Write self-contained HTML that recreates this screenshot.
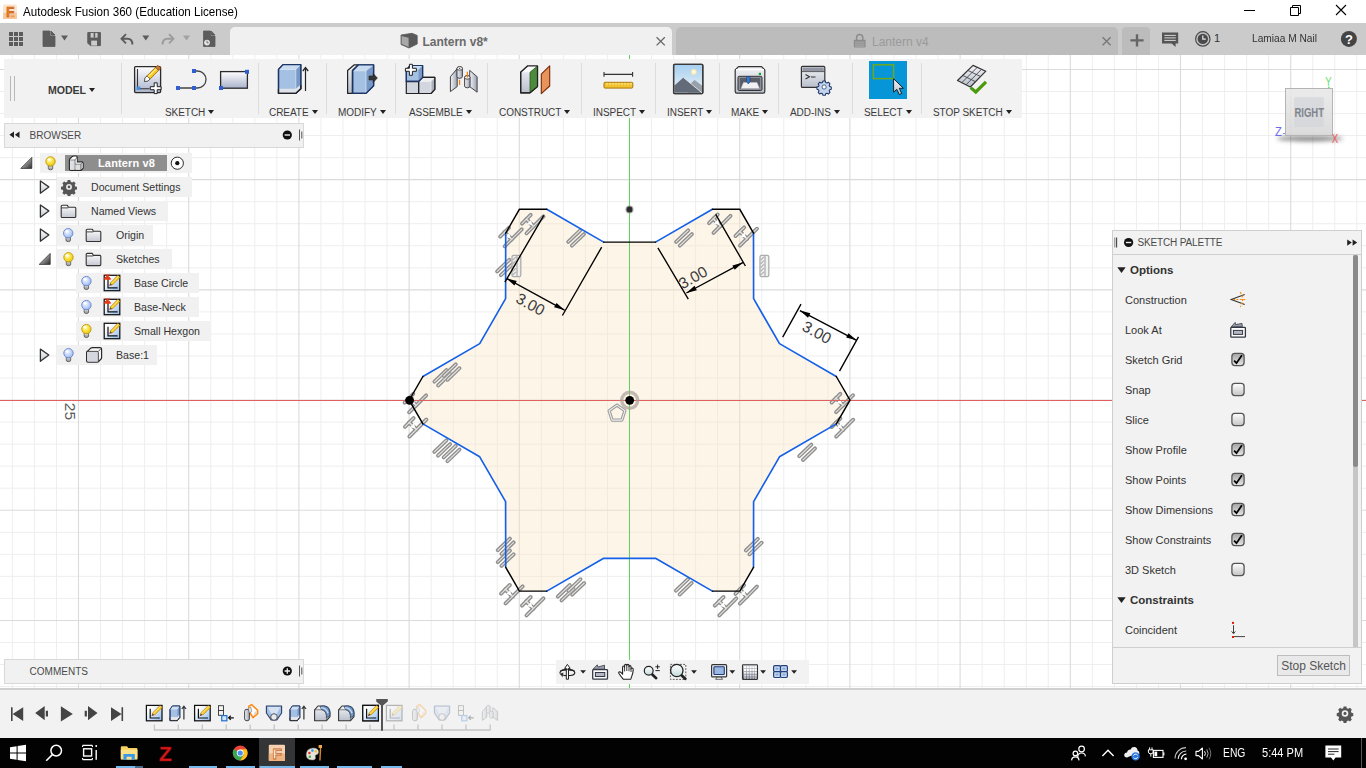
<!DOCTYPE html>
<html lang="en">
<head>
<meta charset="utf-8">
<title>Autodesk Fusion 360 (Education License)</title>
<style>
*{box-sizing:border-box;margin:0;padding:0}
html,body{width:1366px;height:768px;overflow:hidden;background:#fff}
body{position:relative;font-family:"Liberation Sans",Arial,sans-serif;font-size:12px;color:#3c3c3c}
.abs{position:absolute}
#titlebar{left:0;top:0;width:1366px;height:23px;background:#fff}
#titlebar .t{left:23px;top:5px;font-size:12.4px;color:#000;white-space:nowrap;transform:scaleX(0.937);transform-origin:0 0}
#tabbar{left:0;top:23px;width:1366px;height:32px;background:#cbcbcb}
#tab1{left:230px;top:27px;width:442px;height:28px;background:#f0f0f0;border-radius:5px 5px 0 0}
#tab2{left:676px;top:27px;width:442px;height:28px;background:#bcbcbc;border-radius:5px 5px 0 0}
#tabplus{left:1122px;top:27px;width:28px;height:28px;background:#bcbcbc;border-radius:4px 4px 0 0}
#canvas{left:0;top:55px;width:1366px;height:634px;background:#fff}
#toolbar{left:4px;top:59px;width:1018px;height:59px;background:#f2f2f2}
.tl{position:absolute;top:107px;font-size:10px;color:#3a3a3a;white-space:nowrap;letter-spacing:-0.05px}
.tl:after{content:"";display:inline-block;margin-left:3px;border:3.5px solid transparent;border-top:4.5px solid #222;border-bottom:none;vertical-align:2px}
.sep{position:absolute;top:63px;width:1px;height:51px;background:#dcdcdc}
#bottombar{left:0;top:688px;width:1366px;height:50px;background:#f2f2f2;border-top:2px solid #d0d0d0}
#taskbar{left:0;top:738px;width:1366px;height:30px;background:#020202}
.panelhdr{background:#f1f1f1;border:1px solid #d8d8d8;font-size:10px;color:#4a4a4a}
.tree{position:absolute;height:19.5px;margin-top:0.2px;background:#f1f1f1;font-size:10.6px;color:#333;line-height:20.6px;white-space:nowrap}
.pl{position:absolute;left:1125px;font-size:11px;color:#333;white-space:nowrap}
.cb{position:absolute;left:1232px;width:12px;height:12px;border:1px solid #555;border-radius:3px;background:linear-gradient(#fafafa,#d8d8d8)}
</style>
</head>
<body>
<svg class="abs" style="left:0;top:0" width="1366" height="768" viewBox="0 0 1366 768">
<path d="M12.38 55V689M34.42 55V689M56.46 55V689M100.54 55V689M122.58 55V689M144.62 55V689M166.66 55V689M210.74 55V689M232.78 55V689M254.82 55V689M276.86 55V689M320.94 55V689M342.98 55V689M365.02 55V689M387.06 55V689M431.14 55V689M453.18 55V689M475.22 55V689M497.26 55V689M541.34 55V689M563.38 55V689M585.42 55V689M607.46 55V689M651.54 55V689M673.58 55V689M695.62 55V689M717.66 55V689M761.74 55V689M783.78 55V689M805.82 55V689M827.86 55V689M871.94 55V689M893.98 55V689M916.02 55V689M938.06 55V689M982.14 55V689M1004.18 55V689M1026.22 55V689M1048.26 55V689M1092.34 55V689M1114.38 55V689M1136.42 55V689M1158.46 55V689M1202.54 55V689M1224.58 55V689M1246.62 55V689M1268.66 55V689M1312.74 55V689M1334.78 55V689M1356.82 55V689M0 91.49H1366M0 113.53H1366M0 135.57H1366M0 157.61H1366M0 201.69H1366M0 223.73H1366M0 245.77H1366M0 267.81H1366M0 311.89H1366M0 333.93H1366M0 355.97H1366M0 378.01H1366M0 422.09H1366M0 444.13H1366M0 466.17H1366M0 488.21H1366M0 532.29H1366M0 554.33H1366M0 576.37H1366M0 598.41H1366M0 642.49H1366M0 664.53H1366M0 686.57H1366" stroke="#eeeeee" stroke-width="1" fill="none"/>
<path d="M78.50 55V689M188.70 55V689M298.90 55V689M409.10 55V689M519.30 55V689M629.50 55V689M739.70 55V689M849.90 55V689M960.10 55V689M1070.30 55V689M1180.50 55V689M1290.70 55V689M0 69.45H1366M0 179.65H1366M0 289.85H1366M0 400.05H1366M0 510.25H1366M0 620.45H1366" stroke="#dbdbdb" stroke-width="1.1" fill="none"/>
<polygon points="836.3,376.5 850.0,400.2 836.3,423.9 779.5,456.8 753.6,501.7 753.5,567.3 739.8,591.1 712.4,591.1 655.5,558.3 603.7,558.3 546.8,591.1 519.4,591.1 505.7,567.3 505.6,501.7 479.7,456.8 422.9,423.9 409.2,400.2 422.9,376.5 479.7,343.6 505.6,298.7 505.7,233.1 519.4,209.3 546.8,209.3 603.7,242.1 655.5,242.1 712.4,209.3 739.8,209.3 753.5,233.1 753.6,298.7 779.5,343.6" fill="#f9e3c0" fill-opacity="0.36"/>
<path d="M500.2 236.6L508.9 227.9" stroke="#ffffff" stroke-opacity="0.3" stroke-width="5.0" stroke-linecap="round" fill="none"/>
<path d="M504.7 246.3L521.7 229.3" stroke="#ffffff" stroke-opacity="0.3" stroke-width="5.0" stroke-linecap="round" fill="none"/>
<path d="M504.6 232.3L511.6 239.3" stroke="#ffffff" stroke-opacity="0.3" stroke-width="5.4" stroke-linecap="round" fill="none"/>
<path d="M500.2 236.6L508.9 227.9" stroke="#8e8e8e" stroke-opacity="1" stroke-width="3.9" stroke-linecap="round" fill="none"/>
<path d="M504.7 246.3L521.7 229.3" stroke="#8e8e8e" stroke-opacity="1" stroke-width="3.9" stroke-linecap="round" fill="none"/>
<path d="M504.6 232.3L511.6 239.3" stroke="#8e8e8e" stroke-opacity="1" stroke-width="4.3" stroke-linecap="round" fill="none"/>
<path d="M500.2 236.6L508.9 227.9" stroke="#e4e1dc" stroke-opacity="1" stroke-width="1.2" stroke-linecap="round" fill="none"/>
<path d="M504.7 246.3L521.7 229.3" stroke="#e4e1dc" stroke-opacity="1" stroke-width="1.2" stroke-linecap="round" fill="none"/>
<path d="M504.6 232.3L511.6 239.3" stroke="#e4e1dc" stroke-opacity="1" stroke-width="1.6" stroke-linecap="round" fill="none"/>
<polygon points="505.2,237.0 509.3,232.9 510.6,238.3" fill="#fff"/>
<path d="M522.0 223.6L530.7 214.9" stroke="#ffffff" stroke-opacity="0.3" stroke-width="5.0" stroke-linecap="round" fill="none"/>
<path d="M526.5 233.3L543.5 216.3" stroke="#ffffff" stroke-opacity="0.3" stroke-width="5.0" stroke-linecap="round" fill="none"/>
<path d="M526.4 219.3L533.4 226.3" stroke="#ffffff" stroke-opacity="0.3" stroke-width="5.4" stroke-linecap="round" fill="none"/>
<path d="M522.0 223.6L530.7 214.9" stroke="#8e8e8e" stroke-opacity="1" stroke-width="3.9" stroke-linecap="round" fill="none"/>
<path d="M526.5 233.3L543.5 216.3" stroke="#8e8e8e" stroke-opacity="1" stroke-width="3.9" stroke-linecap="round" fill="none"/>
<path d="M526.4 219.3L533.4 226.3" stroke="#8e8e8e" stroke-opacity="1" stroke-width="4.3" stroke-linecap="round" fill="none"/>
<path d="M522.0 223.6L530.7 214.9" stroke="#e4e1dc" stroke-opacity="1" stroke-width="1.2" stroke-linecap="round" fill="none"/>
<path d="M526.5 233.3L543.5 216.3" stroke="#e4e1dc" stroke-opacity="1" stroke-width="1.2" stroke-linecap="round" fill="none"/>
<path d="M526.4 219.3L533.4 226.3" stroke="#e4e1dc" stroke-opacity="1" stroke-width="1.6" stroke-linecap="round" fill="none"/>
<polygon points="527.0,224.0 531.1,219.9 532.4,225.3" fill="#fff"/>
<path d="M709.0 223.2L717.7 214.5" stroke="#ffffff" stroke-opacity="0.3" stroke-width="5.0" stroke-linecap="round" fill="none"/>
<path d="M713.5 232.9L730.5 215.9" stroke="#ffffff" stroke-opacity="0.3" stroke-width="5.0" stroke-linecap="round" fill="none"/>
<path d="M713.4 218.9L720.4 225.9" stroke="#ffffff" stroke-opacity="0.3" stroke-width="5.4" stroke-linecap="round" fill="none"/>
<path d="M709.0 223.2L717.7 214.5" stroke="#8e8e8e" stroke-opacity="1" stroke-width="3.9" stroke-linecap="round" fill="none"/>
<path d="M713.5 232.9L730.5 215.9" stroke="#8e8e8e" stroke-opacity="1" stroke-width="3.9" stroke-linecap="round" fill="none"/>
<path d="M713.4 218.9L720.4 225.9" stroke="#8e8e8e" stroke-opacity="1" stroke-width="4.3" stroke-linecap="round" fill="none"/>
<path d="M709.0 223.2L717.7 214.5" stroke="#e4e1dc" stroke-opacity="1" stroke-width="1.2" stroke-linecap="round" fill="none"/>
<path d="M713.5 232.9L730.5 215.9" stroke="#e4e1dc" stroke-opacity="1" stroke-width="1.2" stroke-linecap="round" fill="none"/>
<path d="M713.4 218.9L720.4 225.9" stroke="#e4e1dc" stroke-opacity="1" stroke-width="1.6" stroke-linecap="round" fill="none"/>
<polygon points="714.0,223.6 718.1,219.5 719.4,224.9" fill="#fff"/>
<path d="M735.5 236.0L744.2 227.3" stroke="#ffffff" stroke-opacity="0.3" stroke-width="5.0" stroke-linecap="round" fill="none"/>
<path d="M740.0 245.7L757.0 228.7" stroke="#ffffff" stroke-opacity="0.3" stroke-width="5.0" stroke-linecap="round" fill="none"/>
<path d="M739.9 231.7L746.9 238.7" stroke="#ffffff" stroke-opacity="0.3" stroke-width="5.4" stroke-linecap="round" fill="none"/>
<path d="M735.5 236.0L744.2 227.3" stroke="#8e8e8e" stroke-opacity="1" stroke-width="3.9" stroke-linecap="round" fill="none"/>
<path d="M740.0 245.7L757.0 228.7" stroke="#8e8e8e" stroke-opacity="1" stroke-width="3.9" stroke-linecap="round" fill="none"/>
<path d="M739.9 231.7L746.9 238.7" stroke="#8e8e8e" stroke-opacity="1" stroke-width="4.3" stroke-linecap="round" fill="none"/>
<path d="M735.5 236.0L744.2 227.3" stroke="#e4e1dc" stroke-opacity="1" stroke-width="1.2" stroke-linecap="round" fill="none"/>
<path d="M740.0 245.7L757.0 228.7" stroke="#e4e1dc" stroke-opacity="1" stroke-width="1.2" stroke-linecap="round" fill="none"/>
<path d="M739.9 231.7L746.9 238.7" stroke="#e4e1dc" stroke-opacity="1" stroke-width="1.6" stroke-linecap="round" fill="none"/>
<polygon points="740.5,236.4 744.6,232.3 745.9,237.7" fill="#fff"/>
<path d="M404.6 402.6L413.3 393.9" stroke="#ffffff" stroke-opacity="0.3" stroke-width="5.0" stroke-linecap="round" fill="none"/>
<path d="M409.1 412.3L426.1 395.3" stroke="#ffffff" stroke-opacity="0.3" stroke-width="5.0" stroke-linecap="round" fill="none"/>
<path d="M409.0 398.3L416.0 405.3" stroke="#ffffff" stroke-opacity="0.3" stroke-width="5.4" stroke-linecap="round" fill="none"/>
<path d="M404.6 402.6L413.3 393.9" stroke="#8e8e8e" stroke-opacity="1" stroke-width="3.9" stroke-linecap="round" fill="none"/>
<path d="M409.1 412.3L426.1 395.3" stroke="#8e8e8e" stroke-opacity="1" stroke-width="3.9" stroke-linecap="round" fill="none"/>
<path d="M409.0 398.3L416.0 405.3" stroke="#8e8e8e" stroke-opacity="1" stroke-width="4.3" stroke-linecap="round" fill="none"/>
<path d="M404.6 402.6L413.3 393.9" stroke="#e4e1dc" stroke-opacity="1" stroke-width="1.2" stroke-linecap="round" fill="none"/>
<path d="M409.1 412.3L426.1 395.3" stroke="#e4e1dc" stroke-opacity="1" stroke-width="1.2" stroke-linecap="round" fill="none"/>
<path d="M409.0 398.3L416.0 405.3" stroke="#e4e1dc" stroke-opacity="1" stroke-width="1.6" stroke-linecap="round" fill="none"/>
<polygon points="409.6,403.0 413.7,398.9 415.0,404.3" fill="#fff"/>
<path d="M404.9 426.8L413.6 418.1" stroke="#ffffff" stroke-opacity="0.3" stroke-width="5.0" stroke-linecap="round" fill="none"/>
<path d="M409.4 436.5L426.4 419.5" stroke="#ffffff" stroke-opacity="0.3" stroke-width="5.0" stroke-linecap="round" fill="none"/>
<path d="M409.3 422.5L416.3 429.5" stroke="#ffffff" stroke-opacity="0.3" stroke-width="5.4" stroke-linecap="round" fill="none"/>
<path d="M404.9 426.8L413.6 418.1" stroke="#8e8e8e" stroke-opacity="1" stroke-width="3.9" stroke-linecap="round" fill="none"/>
<path d="M409.4 436.5L426.4 419.5" stroke="#8e8e8e" stroke-opacity="1" stroke-width="3.9" stroke-linecap="round" fill="none"/>
<path d="M409.3 422.5L416.3 429.5" stroke="#8e8e8e" stroke-opacity="1" stroke-width="4.3" stroke-linecap="round" fill="none"/>
<path d="M404.9 426.8L413.6 418.1" stroke="#e4e1dc" stroke-opacity="1" stroke-width="1.2" stroke-linecap="round" fill="none"/>
<path d="M409.4 436.5L426.4 419.5" stroke="#e4e1dc" stroke-opacity="1" stroke-width="1.2" stroke-linecap="round" fill="none"/>
<path d="M409.3 422.5L416.3 429.5" stroke="#e4e1dc" stroke-opacity="1" stroke-width="1.6" stroke-linecap="round" fill="none"/>
<polygon points="409.9,427.2 414.0,423.1 415.3,428.5" fill="#fff"/>
<path d="M831.6 402.5L840.3 393.8" stroke="#ffffff" stroke-opacity="0.3" stroke-width="5.0" stroke-linecap="round" fill="none"/>
<path d="M836.1 412.2L853.1 395.2" stroke="#ffffff" stroke-opacity="0.3" stroke-width="5.0" stroke-linecap="round" fill="none"/>
<path d="M836.0 398.2L843.0 405.2" stroke="#ffffff" stroke-opacity="0.3" stroke-width="5.4" stroke-linecap="round" fill="none"/>
<path d="M831.6 402.5L840.3 393.8" stroke="#8e8e8e" stroke-opacity="1" stroke-width="3.9" stroke-linecap="round" fill="none"/>
<path d="M836.1 412.2L853.1 395.2" stroke="#8e8e8e" stroke-opacity="1" stroke-width="3.9" stroke-linecap="round" fill="none"/>
<path d="M836.0 398.2L843.0 405.2" stroke="#8e8e8e" stroke-opacity="1" stroke-width="4.3" stroke-linecap="round" fill="none"/>
<path d="M831.6 402.5L840.3 393.8" stroke="#e4e1dc" stroke-opacity="1" stroke-width="1.2" stroke-linecap="round" fill="none"/>
<path d="M836.1 412.2L853.1 395.2" stroke="#e4e1dc" stroke-opacity="1" stroke-width="1.2" stroke-linecap="round" fill="none"/>
<path d="M836.0 398.2L843.0 405.2" stroke="#e4e1dc" stroke-opacity="1" stroke-width="1.6" stroke-linecap="round" fill="none"/>
<polygon points="836.6,402.9 840.7,398.8 842.0,404.2" fill="#fff"/>
<path d="M831.7 427.0L840.4 418.3" stroke="#ffffff" stroke-opacity="0.3" stroke-width="5.0" stroke-linecap="round" fill="none"/>
<path d="M836.2 436.7L853.2 419.7" stroke="#ffffff" stroke-opacity="0.3" stroke-width="5.0" stroke-linecap="round" fill="none"/>
<path d="M836.1 422.7L843.1 429.7" stroke="#ffffff" stroke-opacity="0.3" stroke-width="5.4" stroke-linecap="round" fill="none"/>
<path d="M831.7 427.0L840.4 418.3" stroke="#8e8e8e" stroke-opacity="1" stroke-width="3.9" stroke-linecap="round" fill="none"/>
<path d="M836.2 436.7L853.2 419.7" stroke="#8e8e8e" stroke-opacity="1" stroke-width="3.9" stroke-linecap="round" fill="none"/>
<path d="M836.1 422.7L843.1 429.7" stroke="#8e8e8e" stroke-opacity="1" stroke-width="4.3" stroke-linecap="round" fill="none"/>
<path d="M831.7 427.0L840.4 418.3" stroke="#e4e1dc" stroke-opacity="1" stroke-width="1.2" stroke-linecap="round" fill="none"/>
<path d="M836.2 436.7L853.2 419.7" stroke="#e4e1dc" stroke-opacity="1" stroke-width="1.2" stroke-linecap="round" fill="none"/>
<path d="M836.1 422.7L843.1 429.7" stroke="#e4e1dc" stroke-opacity="1" stroke-width="1.6" stroke-linecap="round" fill="none"/>
<polygon points="836.7,427.4 840.8,423.3 842.1,428.7" fill="#fff"/>
<path d="M501.1 593.7L509.8 585.0" stroke="#ffffff" stroke-opacity="0.3" stroke-width="5.0" stroke-linecap="round" fill="none"/>
<path d="M505.6 603.4L522.6 586.4" stroke="#ffffff" stroke-opacity="0.3" stroke-width="5.0" stroke-linecap="round" fill="none"/>
<path d="M505.5 589.4L512.5 596.4" stroke="#ffffff" stroke-opacity="0.3" stroke-width="5.4" stroke-linecap="round" fill="none"/>
<path d="M501.1 593.7L509.8 585.0" stroke="#8e8e8e" stroke-opacity="1" stroke-width="3.9" stroke-linecap="round" fill="none"/>
<path d="M505.6 603.4L522.6 586.4" stroke="#8e8e8e" stroke-opacity="1" stroke-width="3.9" stroke-linecap="round" fill="none"/>
<path d="M505.5 589.4L512.5 596.4" stroke="#8e8e8e" stroke-opacity="1" stroke-width="4.3" stroke-linecap="round" fill="none"/>
<path d="M501.1 593.7L509.8 585.0" stroke="#e4e1dc" stroke-opacity="1" stroke-width="1.2" stroke-linecap="round" fill="none"/>
<path d="M505.6 603.4L522.6 586.4" stroke="#e4e1dc" stroke-opacity="1" stroke-width="1.2" stroke-linecap="round" fill="none"/>
<path d="M505.5 589.4L512.5 596.4" stroke="#e4e1dc" stroke-opacity="1" stroke-width="1.6" stroke-linecap="round" fill="none"/>
<polygon points="506.1,594.1 510.2,590.0 511.5,595.4" fill="#fff"/>
<path d="M522.0 605.7L530.7 597.0" stroke="#ffffff" stroke-opacity="0.3" stroke-width="5.0" stroke-linecap="round" fill="none"/>
<path d="M526.5 615.4L543.5 598.4" stroke="#ffffff" stroke-opacity="0.3" stroke-width="5.0" stroke-linecap="round" fill="none"/>
<path d="M526.4 601.4L533.4 608.4" stroke="#ffffff" stroke-opacity="0.3" stroke-width="5.4" stroke-linecap="round" fill="none"/>
<path d="M522.0 605.7L530.7 597.0" stroke="#8e8e8e" stroke-opacity="1" stroke-width="3.9" stroke-linecap="round" fill="none"/>
<path d="M526.5 615.4L543.5 598.4" stroke="#8e8e8e" stroke-opacity="1" stroke-width="3.9" stroke-linecap="round" fill="none"/>
<path d="M526.4 601.4L533.4 608.4" stroke="#8e8e8e" stroke-opacity="1" stroke-width="4.3" stroke-linecap="round" fill="none"/>
<path d="M522.0 605.7L530.7 597.0" stroke="#e4e1dc" stroke-opacity="1" stroke-width="1.2" stroke-linecap="round" fill="none"/>
<path d="M526.5 615.4L543.5 598.4" stroke="#e4e1dc" stroke-opacity="1" stroke-width="1.2" stroke-linecap="round" fill="none"/>
<path d="M526.4 601.4L533.4 608.4" stroke="#e4e1dc" stroke-opacity="1" stroke-width="1.6" stroke-linecap="round" fill="none"/>
<polygon points="527.0,606.1 531.1,602.0 532.4,607.4" fill="#fff"/>
<path d="M714.8 605.7L723.5 597.0" stroke="#ffffff" stroke-opacity="0.3" stroke-width="5.0" stroke-linecap="round" fill="none"/>
<path d="M719.3 615.4L736.3 598.4" stroke="#ffffff" stroke-opacity="0.3" stroke-width="5.0" stroke-linecap="round" fill="none"/>
<path d="M719.2 601.4L726.2 608.4" stroke="#ffffff" stroke-opacity="0.3" stroke-width="5.4" stroke-linecap="round" fill="none"/>
<path d="M714.8 605.7L723.5 597.0" stroke="#8e8e8e" stroke-opacity="1" stroke-width="3.9" stroke-linecap="round" fill="none"/>
<path d="M719.3 615.4L736.3 598.4" stroke="#8e8e8e" stroke-opacity="1" stroke-width="3.9" stroke-linecap="round" fill="none"/>
<path d="M719.2 601.4L726.2 608.4" stroke="#8e8e8e" stroke-opacity="1" stroke-width="4.3" stroke-linecap="round" fill="none"/>
<path d="M714.8 605.7L723.5 597.0" stroke="#e4e1dc" stroke-opacity="1" stroke-width="1.2" stroke-linecap="round" fill="none"/>
<path d="M719.3 615.4L736.3 598.4" stroke="#e4e1dc" stroke-opacity="1" stroke-width="1.2" stroke-linecap="round" fill="none"/>
<path d="M719.2 601.4L726.2 608.4" stroke="#e4e1dc" stroke-opacity="1" stroke-width="1.6" stroke-linecap="round" fill="none"/>
<polygon points="719.8,606.1 723.9,602.0 725.2,607.4" fill="#fff"/>
<path d="M735.4 593.9L744.1 585.2" stroke="#ffffff" stroke-opacity="0.3" stroke-width="5.0" stroke-linecap="round" fill="none"/>
<path d="M739.9 603.6L756.9 586.6" stroke="#ffffff" stroke-opacity="0.3" stroke-width="5.0" stroke-linecap="round" fill="none"/>
<path d="M739.8 589.6L746.8 596.6" stroke="#ffffff" stroke-opacity="0.3" stroke-width="5.4" stroke-linecap="round" fill="none"/>
<path d="M735.4 593.9L744.1 585.2" stroke="#8e8e8e" stroke-opacity="1" stroke-width="3.9" stroke-linecap="round" fill="none"/>
<path d="M739.9 603.6L756.9 586.6" stroke="#8e8e8e" stroke-opacity="1" stroke-width="3.9" stroke-linecap="round" fill="none"/>
<path d="M739.8 589.6L746.8 596.6" stroke="#8e8e8e" stroke-opacity="1" stroke-width="4.3" stroke-linecap="round" fill="none"/>
<path d="M735.4 593.9L744.1 585.2" stroke="#e4e1dc" stroke-opacity="1" stroke-width="1.2" stroke-linecap="round" fill="none"/>
<path d="M739.9 603.6L756.9 586.6" stroke="#e4e1dc" stroke-opacity="1" stroke-width="1.2" stroke-linecap="round" fill="none"/>
<path d="M739.8 589.6L746.8 596.6" stroke="#e4e1dc" stroke-opacity="1" stroke-width="1.6" stroke-linecap="round" fill="none"/>
<polygon points="740.4,594.3 744.5,590.2 745.8,595.6" fill="#fff"/>
<path d="M568.2 241.9L580.3 230.3" stroke="#ffffff" stroke-opacity="0.3" stroke-width="5.0" stroke-linecap="round" fill="none"/>
<path d="M571.9 245.7L584.0 234.1" stroke="#ffffff" stroke-opacity="0.3" stroke-width="5.0" stroke-linecap="round" fill="none"/>
<path d="M568.2 241.9L580.3 230.3" stroke="#8e8e8e" stroke-opacity="1" stroke-width="3.9" stroke-linecap="round" fill="none"/>
<path d="M571.9 245.7L584.0 234.1" stroke="#8e8e8e" stroke-opacity="1" stroke-width="3.9" stroke-linecap="round" fill="none"/>
<path d="M568.2 241.9L580.3 230.3" stroke="#e4e1dc" stroke-opacity="1" stroke-width="1.2" stroke-linecap="round" fill="none"/>
<path d="M571.9 245.7L584.0 234.1" stroke="#e4e1dc" stroke-opacity="1" stroke-width="1.2" stroke-linecap="round" fill="none"/>
<path d="M497.2 271.4L509.3 259.8" stroke="#ffffff" stroke-opacity="0.3" stroke-width="5.0" stroke-linecap="round" fill="none"/>
<path d="M500.9 275.2L513.0 263.6" stroke="#ffffff" stroke-opacity="0.3" stroke-width="5.0" stroke-linecap="round" fill="none"/>
<path d="M497.2 271.4L509.3 259.8" stroke="#8e8e8e" stroke-opacity="1" stroke-width="3.9" stroke-linecap="round" fill="none"/>
<path d="M500.9 275.2L513.0 263.6" stroke="#8e8e8e" stroke-opacity="1" stroke-width="3.9" stroke-linecap="round" fill="none"/>
<path d="M497.2 271.4L509.3 259.8" stroke="#e4e1dc" stroke-opacity="1" stroke-width="1.2" stroke-linecap="round" fill="none"/>
<path d="M500.9 275.2L513.0 263.6" stroke="#e4e1dc" stroke-opacity="1" stroke-width="1.2" stroke-linecap="round" fill="none"/>
<path d="M676.1 241.9L688.2 230.3" stroke="#ffffff" stroke-opacity="0.3" stroke-width="5.0" stroke-linecap="round" fill="none"/>
<path d="M679.8 245.7L691.9 234.1" stroke="#ffffff" stroke-opacity="0.3" stroke-width="5.0" stroke-linecap="round" fill="none"/>
<path d="M676.1 241.9L688.2 230.3" stroke="#8e8e8e" stroke-opacity="1" stroke-width="3.9" stroke-linecap="round" fill="none"/>
<path d="M679.8 245.7L691.9 234.1" stroke="#8e8e8e" stroke-opacity="1" stroke-width="3.9" stroke-linecap="round" fill="none"/>
<path d="M676.1 241.9L688.2 230.3" stroke="#e4e1dc" stroke-opacity="1" stroke-width="1.2" stroke-linecap="round" fill="none"/>
<path d="M679.8 245.7L691.9 234.1" stroke="#e4e1dc" stroke-opacity="1" stroke-width="1.2" stroke-linecap="round" fill="none"/>
<path d="M434.4 381.7L446.5 370.1" stroke="#ffffff" stroke-opacity="0.3" stroke-width="5.0" stroke-linecap="round" fill="none"/>
<path d="M438.1 385.5L450.2 373.9" stroke="#ffffff" stroke-opacity="0.3" stroke-width="5.0" stroke-linecap="round" fill="none"/>
<path d="M434.4 381.7L446.5 370.1" stroke="#8e8e8e" stroke-opacity="1" stroke-width="3.9" stroke-linecap="round" fill="none"/>
<path d="M438.1 385.5L450.2 373.9" stroke="#8e8e8e" stroke-opacity="1" stroke-width="3.9" stroke-linecap="round" fill="none"/>
<path d="M434.4 381.7L446.5 370.1" stroke="#e4e1dc" stroke-opacity="1" stroke-width="1.2" stroke-linecap="round" fill="none"/>
<path d="M438.1 385.5L450.2 373.9" stroke="#e4e1dc" stroke-opacity="1" stroke-width="1.2" stroke-linecap="round" fill="none"/>
<path d="M443.7 376.0L455.8 364.4" stroke="#ffffff" stroke-opacity="0.3" stroke-width="5.0" stroke-linecap="round" fill="none"/>
<path d="M447.4 379.8L459.5 368.2" stroke="#ffffff" stroke-opacity="0.3" stroke-width="5.0" stroke-linecap="round" fill="none"/>
<path d="M443.7 376.0L455.8 364.4" stroke="#8e8e8e" stroke-opacity="1" stroke-width="3.9" stroke-linecap="round" fill="none"/>
<path d="M447.4 379.8L459.5 368.2" stroke="#8e8e8e" stroke-opacity="1" stroke-width="3.9" stroke-linecap="round" fill="none"/>
<path d="M443.7 376.0L455.8 364.4" stroke="#e4e1dc" stroke-opacity="1" stroke-width="1.2" stroke-linecap="round" fill="none"/>
<path d="M447.4 379.8L459.5 368.2" stroke="#e4e1dc" stroke-opacity="1" stroke-width="1.2" stroke-linecap="round" fill="none"/>
<path d="M434.3 451.9L446.4 440.3" stroke="#ffffff" stroke-opacity="0.3" stroke-width="5.0" stroke-linecap="round" fill="none"/>
<path d="M438.0 455.7L450.1 444.1" stroke="#ffffff" stroke-opacity="0.3" stroke-width="5.0" stroke-linecap="round" fill="none"/>
<path d="M434.3 451.9L446.4 440.3" stroke="#8e8e8e" stroke-opacity="1" stroke-width="3.9" stroke-linecap="round" fill="none"/>
<path d="M438.0 455.7L450.1 444.1" stroke="#8e8e8e" stroke-opacity="1" stroke-width="3.9" stroke-linecap="round" fill="none"/>
<path d="M434.3 451.9L446.4 440.3" stroke="#e4e1dc" stroke-opacity="1" stroke-width="1.2" stroke-linecap="round" fill="none"/>
<path d="M438.0 455.7L450.1 444.1" stroke="#e4e1dc" stroke-opacity="1" stroke-width="1.2" stroke-linecap="round" fill="none"/>
<path d="M443.7 457.4L455.8 445.8" stroke="#ffffff" stroke-opacity="0.3" stroke-width="5.0" stroke-linecap="round" fill="none"/>
<path d="M447.4 461.2L459.5 449.6" stroke="#ffffff" stroke-opacity="0.3" stroke-width="5.0" stroke-linecap="round" fill="none"/>
<path d="M443.7 457.4L455.8 445.8" stroke="#8e8e8e" stroke-opacity="1" stroke-width="3.9" stroke-linecap="round" fill="none"/>
<path d="M447.4 461.2L459.5 449.6" stroke="#8e8e8e" stroke-opacity="1" stroke-width="3.9" stroke-linecap="round" fill="none"/>
<path d="M443.7 457.4L455.8 445.8" stroke="#e4e1dc" stroke-opacity="1" stroke-width="1.2" stroke-linecap="round" fill="none"/>
<path d="M447.4 461.2L459.5 449.6" stroke="#e4e1dc" stroke-opacity="1" stroke-width="1.2" stroke-linecap="round" fill="none"/>
<path d="M799.2 456.2L811.3 444.6" stroke="#ffffff" stroke-opacity="0.3" stroke-width="5.0" stroke-linecap="round" fill="none"/>
<path d="M802.9 460.0L815.0 448.4" stroke="#ffffff" stroke-opacity="0.3" stroke-width="5.0" stroke-linecap="round" fill="none"/>
<path d="M799.2 456.2L811.3 444.6" stroke="#8e8e8e" stroke-opacity="1" stroke-width="3.9" stroke-linecap="round" fill="none"/>
<path d="M802.9 460.0L815.0 448.4" stroke="#8e8e8e" stroke-opacity="1" stroke-width="3.9" stroke-linecap="round" fill="none"/>
<path d="M799.2 456.2L811.3 444.6" stroke="#e4e1dc" stroke-opacity="1" stroke-width="1.2" stroke-linecap="round" fill="none"/>
<path d="M802.9 460.0L815.0 448.4" stroke="#e4e1dc" stroke-opacity="1" stroke-width="1.2" stroke-linecap="round" fill="none"/>
<path d="M497.8 550.2L509.9 538.6" stroke="#ffffff" stroke-opacity="0.3" stroke-width="5.0" stroke-linecap="round" fill="none"/>
<path d="M501.5 554.0L513.6 542.4" stroke="#ffffff" stroke-opacity="0.3" stroke-width="5.0" stroke-linecap="round" fill="none"/>
<path d="M497.8 550.2L509.9 538.6" stroke="#8e8e8e" stroke-opacity="1" stroke-width="3.9" stroke-linecap="round" fill="none"/>
<path d="M501.5 554.0L513.6 542.4" stroke="#8e8e8e" stroke-opacity="1" stroke-width="3.9" stroke-linecap="round" fill="none"/>
<path d="M497.8 550.2L509.9 538.6" stroke="#e4e1dc" stroke-opacity="1" stroke-width="1.2" stroke-linecap="round" fill="none"/>
<path d="M501.5 554.0L513.6 542.4" stroke="#e4e1dc" stroke-opacity="1" stroke-width="1.2" stroke-linecap="round" fill="none"/>
<path d="M497.8 562.1L509.9 550.5" stroke="#ffffff" stroke-opacity="0.3" stroke-width="5.0" stroke-linecap="round" fill="none"/>
<path d="M501.5 565.9L513.6 554.3" stroke="#ffffff" stroke-opacity="0.3" stroke-width="5.0" stroke-linecap="round" fill="none"/>
<path d="M497.8 562.1L509.9 550.5" stroke="#8e8e8e" stroke-opacity="1" stroke-width="3.9" stroke-linecap="round" fill="none"/>
<path d="M501.5 565.9L513.6 554.3" stroke="#8e8e8e" stroke-opacity="1" stroke-width="3.9" stroke-linecap="round" fill="none"/>
<path d="M497.8 562.1L509.9 550.5" stroke="#e4e1dc" stroke-opacity="1" stroke-width="1.2" stroke-linecap="round" fill="none"/>
<path d="M501.5 565.9L513.6 554.3" stroke="#e4e1dc" stroke-opacity="1" stroke-width="1.2" stroke-linecap="round" fill="none"/>
<path d="M745.8 550.5L757.9 538.9" stroke="#ffffff" stroke-opacity="0.3" stroke-width="5.0" stroke-linecap="round" fill="none"/>
<path d="M749.5 554.3L761.6 542.7" stroke="#ffffff" stroke-opacity="0.3" stroke-width="5.0" stroke-linecap="round" fill="none"/>
<path d="M745.8 550.5L757.9 538.9" stroke="#8e8e8e" stroke-opacity="1" stroke-width="3.9" stroke-linecap="round" fill="none"/>
<path d="M749.5 554.3L761.6 542.7" stroke="#8e8e8e" stroke-opacity="1" stroke-width="3.9" stroke-linecap="round" fill="none"/>
<path d="M745.8 550.5L757.9 538.9" stroke="#e4e1dc" stroke-opacity="1" stroke-width="1.2" stroke-linecap="round" fill="none"/>
<path d="M749.5 554.3L761.6 542.7" stroke="#e4e1dc" stroke-opacity="1" stroke-width="1.2" stroke-linecap="round" fill="none"/>
<path d="M557.8 596.6L569.9 585.0" stroke="#ffffff" stroke-opacity="0.3" stroke-width="5.0" stroke-linecap="round" fill="none"/>
<path d="M561.5 600.4L573.6 588.8" stroke="#ffffff" stroke-opacity="0.3" stroke-width="5.0" stroke-linecap="round" fill="none"/>
<path d="M557.8 596.6L569.9 585.0" stroke="#8e8e8e" stroke-opacity="1" stroke-width="3.9" stroke-linecap="round" fill="none"/>
<path d="M561.5 600.4L573.6 588.8" stroke="#8e8e8e" stroke-opacity="1" stroke-width="3.9" stroke-linecap="round" fill="none"/>
<path d="M557.8 596.6L569.9 585.0" stroke="#e4e1dc" stroke-opacity="1" stroke-width="1.2" stroke-linecap="round" fill="none"/>
<path d="M561.5 600.4L573.6 588.8" stroke="#e4e1dc" stroke-opacity="1" stroke-width="1.2" stroke-linecap="round" fill="none"/>
<path d="M568.4 590.8L580.5 579.2" stroke="#ffffff" stroke-opacity="0.3" stroke-width="5.0" stroke-linecap="round" fill="none"/>
<path d="M572.1 594.6L584.2 583.0" stroke="#ffffff" stroke-opacity="0.3" stroke-width="5.0" stroke-linecap="round" fill="none"/>
<path d="M568.4 590.8L580.5 579.2" stroke="#8e8e8e" stroke-opacity="1" stroke-width="3.9" stroke-linecap="round" fill="none"/>
<path d="M572.1 594.6L584.2 583.0" stroke="#8e8e8e" stroke-opacity="1" stroke-width="3.9" stroke-linecap="round" fill="none"/>
<path d="M568.4 590.8L580.5 579.2" stroke="#e4e1dc" stroke-opacity="1" stroke-width="1.2" stroke-linecap="round" fill="none"/>
<path d="M572.1 594.6L584.2 583.0" stroke="#e4e1dc" stroke-opacity="1" stroke-width="1.2" stroke-linecap="round" fill="none"/>
<path d="M675.9 590.7L688.0 579.1" stroke="#ffffff" stroke-opacity="0.3" stroke-width="5.0" stroke-linecap="round" fill="none"/>
<path d="M679.6 594.5L691.7 582.9" stroke="#ffffff" stroke-opacity="0.3" stroke-width="5.0" stroke-linecap="round" fill="none"/>
<path d="M675.9 590.7L688.0 579.1" stroke="#8e8e8e" stroke-opacity="1" stroke-width="3.9" stroke-linecap="round" fill="none"/>
<path d="M679.6 594.5L691.7 582.9" stroke="#8e8e8e" stroke-opacity="1" stroke-width="3.9" stroke-linecap="round" fill="none"/>
<path d="M675.9 590.7L688.0 579.1" stroke="#e4e1dc" stroke-opacity="1" stroke-width="1.2" stroke-linecap="round" fill="none"/>
<path d="M679.6 594.5L691.7 582.9" stroke="#e4e1dc" stroke-opacity="1" stroke-width="1.2" stroke-linecap="round" fill="none"/>
<rect x="512.0" y="255.4" width="8.8" height="21.2" rx="1.6" fill="#f0f0f0" fill-opacity="0.8" stroke="#adadad" stroke-width="1.3"/>
<path d="M517.0 255.6V276.4" stroke="#adadad" stroke-width="1.3"/>
<path d="M512.8 260.1L515.8 256.9M512.8 263.9L515.8 260.6M512.8 267.6L515.8 264.4M512.8 271.4L515.8 268.1M512.8 275.1L515.8 271.9" stroke="#adadad" stroke-width="1.2"/>
<rect x="760.0" y="255.4" width="8.8" height="21.2" rx="1.6" fill="#f0f0f0" fill-opacity="0.8" stroke="#adadad" stroke-width="1.3"/>
<path d="M765.0 255.6V276.4" stroke="#adadad" stroke-width="1.3"/>
<path d="M760.8 260.1L763.8 256.9M760.8 263.9L763.8 260.6M760.8 267.6L763.8 264.4M760.8 271.4L763.8 268.1M760.8 275.1L763.8 271.9" stroke="#adadad" stroke-width="1.2"/>
<polygon points="617.0,405.1 624.9,410.8 621.9,420.1 612.1,420.1 609.1,410.8" fill="none" stroke="#9c9c9c" stroke-width="3.2" stroke-linejoin="round"/>
<polygon points="617.0,405.1 624.9,410.8 621.9,420.1 612.1,420.1 609.1,410.8" fill="none" stroke="#f0f0f0" stroke-width="1.1" stroke-linejoin="round"/>
<path d="M0 400.5H1366" stroke="#e06060" stroke-width="1"/>
<path d="M629.5 55V689" stroke="#5fd35f" stroke-width="1"/>
<path d="M836.3 423.9L779.5 456.8M779.5 456.8L753.6 501.7M753.6 501.7L753.5 567.3M712.4 591.1L655.5 558.3M655.5 558.3L603.7 558.3M603.7 558.3L546.8 591.1M505.7 567.3L505.6 501.7M505.6 501.7L479.7 456.8M479.7 456.8L422.9 423.9M422.9 376.5L479.7 343.6M479.7 343.6L505.6 298.7M505.6 298.7L505.7 233.1M546.8 209.3L603.7 242.1M655.5 242.1L712.4 209.3M753.5 233.1L753.6 298.7M753.6 298.7L779.5 343.6M779.5 343.6L836.3 376.5" stroke="#1460e8" stroke-width="1.65" fill="none" stroke-linecap="round"/>
<path d="M836.3 376.5L850.0 400.2L836.3 423.9M753.5 567.3L739.8 591.1L712.4 591.1M546.8 591.1L519.4 591.1L505.7 567.3M422.9 423.9L409.2 400.2L422.9 376.5M505.7 233.1L519.4 209.3L546.8 209.3M603.7 242.1L655.5 242.1M712.4 209.3L739.8 209.3L753.5 233.1" stroke="#000" stroke-width="1.45" fill="none" stroke-linecap="round"/>
<path d="M543.8 215.3L504.9 282.2M601.7 247.1L562.4 315.5M506.4 278.3L564.5 310.1" stroke="#000" stroke-width="1.35" fill="none"/>
<polygon points="506.4,278.3 514.4,285.5 516.8,281.1" fill="#000"/>
<polygon points="564.5,310.1 554.1,307.3 556.5,302.9" fill="#000"/>
<text x="530.6" y="304.2" transform="rotate(28.7 530.6 304.2)" font-family="Liberation Sans, Arial, sans-serif" font-size="15.5" fill="#3a3a3a" text-anchor="middle" dominant-baseline="central">3.00</text>
<path d="M657.9 247.8L688.3 299.1M715.7 214.3L745.4 266M686.4 293L742.8 262.6" stroke="#000" stroke-width="1.35" fill="none"/>
<polygon points="686.4,293.0 696.8,290.2 694.5,285.8" fill="#000"/>
<polygon points="742.8,262.6 734.7,269.8 732.4,265.4" fill="#000"/>
<text x="692.9" y="277.4" transform="rotate(-29.5 692.9 277.4)" font-family="Liberation Sans, Arial, sans-serif" font-size="15.5" fill="#3a3a3a" text-anchor="middle" dominant-baseline="central">3.00</text>
<path d="M782.7 337.2L801 304.1M839.5 371.1L858.5 336.8M799.9 310.6L856.6 340.3" stroke="#000" stroke-width="1.35" fill="none"/>
<polygon points="799.9,310.6 808.0,317.7 810.4,313.3" fill="#000"/>
<polygon points="856.6,340.3 846.1,337.6 848.5,333.2" fill="#000"/>
<text x="817" y="332.3" transform="rotate(28.7 817 332.3)" font-family="Liberation Sans, Arial, sans-serif" font-size="15.5" fill="#3a3a3a" text-anchor="middle" dominant-baseline="central">3.00</text>
<circle cx="629.7" cy="400.3" r="8" fill="none" stroke="#a8a098" stroke-opacity="0.7" stroke-width="3.4"/>
<circle cx="629.7" cy="400.3" r="4.4" fill="#000"/>
<circle cx="409.6" cy="400.3" r="4.4" fill="#000"/>
<circle cx="629.5" cy="209.4" r="4" fill="#8a8a8a" fill-opacity="0.75"/><circle cx="629.5" cy="209.4" r="2.9" fill="#2c2c2c"/>
<text x="70.2" y="411.4" transform="rotate(90 70.2 411.4)" font-family="Liberation Sans, Arial, sans-serif" font-size="15.5" fill="#5a5a5a" text-anchor="middle" dominant-baseline="central">25</text>
<defs><linearGradient id="vcg" x1="0" y1="0" x2="0" y2="1"><stop offset="0" stop-color="#e8e8e8"/><stop offset="1" stop-color="#d6d6d6"/></linearGradient><filter id="vcb" x="-20%" y="-200%" width="140%" height="500%"><feGaussianBlur stdDeviation="2.2"/></filter></defs>
<ellipse cx="1310" cy="138.6" rx="33" ry="2.8" fill="#444" fill-opacity="0.6" filter="url(#vcb)"/>
<rect x="1285.5" y="88.5" width="47" height="47" fill="url(#vcg)" fill-opacity="0.86" stroke="#b4b4b4" stroke-width="1"/>
<rect x="1294.2" y="97.3" width="29.6" height="29.5" fill="#d3d6db" fill-opacity="0.75"/>
<text x="1309.2" y="116.8" font-family="Liberation Sans, Arial, sans-serif" font-weight="bold" font-size="13.5" fill="#80848c" text-anchor="middle" textLength="29.6" lengthAdjust="spacingAndGlyphs">RIGHT</text>
<text x="1328.4" y="85.6" font-family="Liberation Sans, Arial, sans-serif" font-size="12.5" fill="#66e066" text-anchor="middle" textLength="6.4" lengthAdjust="spacingAndGlyphs">Y</text>
<text x="1278.4" y="135.8" font-family="Liberation Sans, Arial, sans-serif" font-size="12.5" fill="#6a6af2" text-anchor="middle" textLength="6.8" lengthAdjust="spacingAndGlyphs">Z</text>
<text x="1335" y="142.6" font-family="Liberation Sans, Arial, sans-serif" font-size="13" fill="#f05a5a" text-anchor="middle" textLength="6.4" lengthAdjust="spacingAndGlyphs">X</text>
<path d="M1283 133.5h2" stroke="#8a8af2" stroke-width="1"/><path d="M1328 87.4h1.6" stroke="#66e066" stroke-width="1.2"/>
<!--GLYPHS-->
</svg>
<div id="titlebar" class="abs">
  <svg class="abs" style="left:2px;top:3.5px" width="16" height="15.6" viewBox="0 0 16.5 17.5"><rect x="0.5" y="0.5" width="15.5" height="16.5" rx="1.5" fill="#fbe3cc"/><rect x="0.5" y="10" width="15.5" height="7" fill="#f6c79c"/><text x="8.6" y="15" font-family="Liberation Sans, Arial, sans-serif" font-weight="bold" font-size="15.5" fill="#ee8426" stroke="#b4500c" stroke-width="0.5" text-anchor="middle">F</text><rect x="9" y="12.8" width="4.4" height="2.2" fill="#f0a050"/></svg>
  <div class="abs t">Autodesk Fusion 360 (Education License)</div>
  <svg class="abs" style="left:1240px;top:0" width="126" height="23" viewBox="0 0 126 23"><path d="M4 10.5h11" stroke="#000" stroke-width="1"/><path d="M50.5 7.5h8v8h-8zM52.5 7.5v-2h8v8h-2" fill="none" stroke="#000" stroke-width="1"/><path d="M96 5l10 10M106 5l-10 10" stroke="#000" stroke-width="1.1"/></svg>
</div>
<div id="tabbar" class="abs"></div>
<div id="tab1" class="abs"></div>
<div id="tab2" class="abs"></div>
<div id="tabplus" class="abs"></div>
<div class="abs" style="left:422.4px;top:35px;font-size:12px;font-weight:bold;color:#6a6a6a;white-space:nowrap">Lantern v8*</div>
<div class="abs" style="left:872px;top:35px;font-size:12px;color:#9a9a9a;white-space:nowrap">Lantern v4</div>
<div class="abs" style="left:1251.5px;top:32px;font-size:11px;color:#333;white-space:nowrap;transform:scaleX(0.925);transform-origin:0 0">Lamiaa M Nail</div>
<div class="abs" style="left:1214px;top:32px;font-size:11px;color:#333">1</div>
<svg class="abs" style="left:0;top:23px" width="1366" height="32" viewBox="0 0 1366 32">
<!--TB0-->
<g fill="#5c5c5c">
<!-- grid -->
<path d="M9 9h4v4H9zM14 9h4v4h-4zM19 9h4v4h-4zM9 14h4v4H9zM14 14h4v4h-4zM19 14h4v4h-4zM9 19h4v4H9zM14 19h4v4h-4zM19 19h4v4h-4z"/>
<!-- file -->
<path d="M43 8h7v5h5v10.5H43z M51 8l4 4h-4z" stroke="#5c5c5c" stroke-width="0.8" stroke-linejoin="round"/>
<path d="M61 12.6h7l-3.5 5z"/>
<!-- save -->
<path d="M87.8 9.6H100.4V22.6H90.3L87.8 20.1z" stroke="#5c5c5c" stroke-width="1" stroke-linejoin="round"/>
<rect x="90.6" y="10" width="7" height="4.6" fill="#cbcbcb"/><rect x="91.2" y="17.6" width="5.8" height="5" fill="#cbcbcb"/><rect x="93.6" y="10" width="1.6" height="4.6" fill="#5c5c5c"/>
<!-- undo -->
<path d="M126 11.2L121.5 15.8L126 20.4M121.8 15.8H127.5Q132.4 15.8 132.4 21.6" fill="none" stroke="#5c5c5c" stroke-width="1.9"/>
<path d="M142.3 12.6h7l-3.5 5z"/>
<!-- redo -->
<path d="M169 11.2L173.5 15.8L169 20.4M173.2 15.8H167.5Q162.6 15.8 162.6 21.6" fill="none" stroke="#9c9c9c" stroke-width="1.9"/>
<path d="M183 12.6h7l-3.5 5z" fill="#a2a2a2"/>
<!-- file clock -->
<path d="M203.5 8h7v5h4.5v10.5H203.5z M211.2 8l3.8 4h-3.8z" stroke="#5c5c5c" stroke-width="0.8" stroke-linejoin="round"/>
<circle cx="207" cy="19.6" r="2.9" fill="#e2e2e2"/><path d="M207 17.8V19.8H208.6" fill="none" stroke="#5c5c5c" stroke-width="0.8"/>
<!-- cube tab1 -->
<path d="M401 12L412 10.3L417.2 12.4V21L409 25L401 21.5z" fill="#5a5a5a" stroke="#5a5a5a" stroke-width="0.8" stroke-linejoin="round"/>
<path d="M401.6 13L408.6 14.8V24L401.6 21z" fill="#a8a8a8"/>
<!-- close 1 -->
<path d="M656.6 14.2L664.8 22.4M664.8 14.2L656.6 22.4" stroke="#666" stroke-width="1.3" fill="none"/>
<!-- lock -->
<path d="M856.6 17V14.6a3.1 3.1 0 0 1 6.2 0V17" fill="none" stroke="#8c8c8c" stroke-width="1.5"/>
<rect x="853.8" y="16.8" width="11.8" height="7.8" rx="0.8" fill="#8c8c8c"/>
<path d="M855 19.2h9.4M855 21.2h9.4M855 23.1h9.4" stroke="#bcbcbc" stroke-width="0.7"/>
<!-- close 2 -->
<path d="M1102.6 14.2L1110.6 22.2M1110.6 14.2L1102.6 22.2" stroke="#777" stroke-width="1.3" fill="none"/>
<!-- plus -->
<path d="M1130.4 17.4H1143.6M1137 11.2V23.6" stroke="#666" stroke-width="2.4" fill="none"/>
<!-- comment -->
<path d="M1162 9.4H1178.2V20.6H1175.6V24L1171.6 20.6H1162z" fill="#555"/>
<path d="M1164.4 12.4h11.4M1164.4 14.9h11.4M1164.4 17.4h11.4" stroke="#d8d8d8" stroke-width="1"/>
<!-- clock -->
<circle cx="1202.8" cy="15.9" r="7.2" fill="#c4c4c4" stroke="#4a4a4a" stroke-width="1.2"/>
<circle cx="1202.8" cy="15.9" r="5.2" fill="#4a4a4a"/>
<path d="M1202.8 12.4V16.2H1205.8" fill="none" stroke="#e8e8e8" stroke-width="1.2"/>
<!-- help -->
<circle cx="1348.9" cy="15.9" r="8" fill="#444"/>
<text x="1348.9" y="20.6" font-family="Liberation Sans, Arial, sans-serif" font-weight="bold" font-size="13" fill="#fff" text-anchor="middle">?</text>
</g>
<!--TB1-->
</svg>
<div id="toolbar" class="abs"></div>
<div class="sep" style="left:121.2px"></div><div class="sep" style="left:258.2px"></div><div class="sep" style="left:326.2px"></div><div class="sep" style="left:395.2px"></div><div class="sep" style="left:487.2px"></div><div class="sep" style="left:581.2px"></div><div class="sep" style="left:655.2px"></div><div class="sep" style="left:719.2px"></div><div class="sep" style="left:778.2px"></div><div class="sep" style="left:852.2px"></div><div class="sep" style="left:921.2px"></div>
<div class="sep" style="left:10px;top:76px;height:25px;background:#b8b8b8"></div><div class="sep" style="left:14px;top:76px;height:25px;background:#b8b8b8"></div>
<div class="tl" style="left:48px;top:84px;font-weight:bold;font-size:10.6px">MODEL</div>
<div class="tl" style="left:165px">SKETCH</div>
<div class="tl" style="left:269px">CREATE</div>
<div class="tl" style="left:338px">MODIFY</div>
<div class="tl" style="left:409px">ASSEMBLE</div>
<div class="tl" style="left:499px">CONSTRUCT</div>
<div class="tl" style="left:593px">INSPECT</div>
<div class="tl" style="left:667px">INSERT</div>
<div class="tl" style="left:731px">MAKE</div>
<div class="tl" style="left:790px">ADD-INS</div>
<div class="tl" style="left:864px">SELECT</div>
<div class="tl" style="left:933px">STOP SKETCH</div>
<svg class="abs" style="left:0;top:55px" width="1030" height="65" viewBox="0 55 1030 65">
<!--TI0-->
<defs>
<linearGradient id="gw" x1="0" y1="0" x2="0" y2="1"><stop offset="0" stop-color="#ffffff"/><stop offset="1" stop-color="#aab2cc"/></linearGradient>
<linearGradient id="gg" x1="0" y1="0" x2="0" y2="1"><stop offset="0" stop-color="#f2f3f6"/><stop offset="1" stop-color="#b9bfcc"/></linearGradient>
<linearGradient id="gsky" x1="0" y1="0" x2="0" y2="1"><stop offset="0" stop-color="#a5cff0"/><stop offset="1" stop-color="#eef3f8"/></linearGradient>
<linearGradient id="gcyl" x1="0" y1="0" x2="1" y2="0"><stop offset="0" stop-color="#f4f5f8"/><stop offset="1" stop-color="#9aa2b2"/></linearGradient>
</defs>
<!-- create sketch -->
<rect x="134.6" y="66.6" width="26" height="26" rx="1" fill="url(#gw)" stroke="#2b2b2b" stroke-width="1.3"/>
<path d="M137.5 69v19.7h12" fill="none" stroke="#333" stroke-width="1.1"/>
<rect x="136.6" y="86.6" width="3.6" height="3.2" fill="#3d8fe0"/>
<g transform="translate(146.5,79.5) rotate(-45)"><path d="M0 -2.2L3 -2.2L3 2.2L0 2.2L-3 0z" fill="#fff" stroke="#333" stroke-width="0.8"/><rect x="3" y="-2.2" width="12" height="4.4" fill="#f8c820" stroke="#8a5a00" stroke-width="0.7"/><path d="M3 -0.6h12" stroke="#fff2a0" stroke-width="1"/><rect x="15" y="-2.2" width="3.2" height="4.4" rx="0.8" fill="#c87838" stroke="#7a4010" stroke-width="0.6"/></g>
<path d="M154.2 82.8h3v3.9h3.9v3h-3.9v3.9h-3v-3.9h-3.9v-3h3.9z" fill="#fff" stroke="#222" stroke-width="1" stroke-linejoin="round"/>
<!-- line arc -->
<path d="M178 88H197.5A8.5 8.5 0 0 0 197.5 71H194" fill="none" stroke="#444" stroke-width="1.3"/>
<rect x="176" y="86" width="4" height="4" fill="#2f5fd0"/><rect x="192" y="86" width="4" height="4" fill="#2f5fd0"/><rect x="192" y="69" width="4" height="4" fill="#2f5fd0"/>
<!-- rectangle -->
<rect x="220.6" y="71.6" width="26.8" height="16.6" fill="url(#gw)" stroke="#2b2b2b" stroke-width="1.3"/>
<rect x="245" y="69.8" width="4" height="4" fill="#2f5fd0"/><rect x="219" y="86" width="4" height="4" fill="#2f5fd0"/>
<!-- extrude -->
<path d="M278.5 69.5L283 64.6H300.8V88.7L295.8 93.4H278.5z" fill="#a4c0e2" stroke="#1c3566" stroke-width="1.3" stroke-linejoin="round"/>
<path d="M278.5 69.5L283 64.6H300.8L295.8 69.5z" fill="#c9dcf0"/>
<path d="M295.8 69.5L300.8 64.6V88.7L295.8 93.4z" fill="#7898c8"/>
<path d="M278.5 88.8H295.8L300.8 84.4V88.7L295.8 93.4H278.5z" fill="#dfe2e8"/>
<path d="M278.5 69.5H295.8L300.8 64.6M295.8 69.5V93.4" fill="none" stroke="#dfeaf6" stroke-width="0.7"/>
<path d="M278.5 69.5L283 64.6H300.8V88.7L295.8 93.4H278.5z" fill="none" stroke="#1c3566" stroke-width="1.3" stroke-linejoin="round"/>
<path d="M278.5 89V93.4H295.8L300.8 88.7V85" fill="none" stroke="#222" stroke-width="1.3" stroke-linejoin="round"/>
<path d="M305.5 91V69" stroke="#222" stroke-width="1.2"/><path d="M302.8 71L305.5 67.6L308.2 71" fill="none" stroke="#222" stroke-width="1.3"/>
<!-- press pull -->
<path d="M347.6 70.5L354.3 64.8H358.5L352.4 70.5V93.4H347.6z" fill="url(#gg)" stroke="#222" stroke-width="1.2" stroke-linejoin="round"/>
<path d="M352.6 70.8L358.6 64.8H373.6V85.7L366 93.4H352.6z" fill="#a4c0e2" stroke="#1c3566" stroke-width="1.3" stroke-linejoin="round"/>
<path d="M352.6 70.8L358.6 64.8H373.6L366 70.8z" fill="#c9dcf0"/>
<path d="M366 70.8L373.6 64.8V85.7L366 93.4z" fill="#7898c8"/>
<path d="M352.6 70.8H366L373.6 64.8M366 70.8V93.4" fill="none" stroke="#dfeaf6" stroke-width="0.7"/>
<path d="M352.6 70.8L358.6 64.8H373.6V85.7L366 93.4H352.6z" fill="none" stroke="#1c3566" stroke-width="1.3" stroke-linejoin="round"/>
<path d="M369 76h4.2v-2.4l4.2 4.4-4.2 4.4v-2.4H369z" fill="#333" stroke="#222" stroke-width="0.6" stroke-linejoin="round"/>
<!-- new component -->
<path d="M406.3 81.6H418.6V93.5H406.3z" fill="#d2d6de" stroke="#222" stroke-width="1.2"/>
<path d="M418.6 81.6L422.6 77.3H434.8V89.4L431 93.5H418.6z" fill="#d2d6de" stroke="#222" stroke-width="1.2" stroke-linejoin="round"/>
<path d="M418.6 81.6L422.6 77.3H434.8L431 81.6z" fill="#eceef2"/><path d="M431 81.6L434.8 77.3V89.4L431 93.5z" fill="#aab0bc"/>
<path d="M418.6 81.6H431V93.5M431 81.6L434.8 77.3" fill="none" stroke="#f4f5f7" stroke-width="0.7"/>
<path d="M418.6 81.6L422.6 77.3H434.8V89.4L431 93.5H418.6z" fill="none" stroke="#222" stroke-width="1.2" stroke-linejoin="round"/>
<path d="M406.3 69.8L410.3 65.5H422.6V77.3L418.6 81.4H406.3z" fill="#a4c0e2" stroke="#1c3566" stroke-width="1.2" stroke-linejoin="round"/>
<path d="M406.3 69.8L410.3 65.5H422.6L418.6 69.8z" fill="#c9dcf0"/><path d="M418.6 69.8L422.6 65.5V77.3L418.6 81.4z" fill="#7898c8"/>
<path d="M406.3 69.8L410.3 65.5H422.6V77.3L418.6 81.4H406.3z" fill="none" stroke="#1c3566" stroke-width="1.2" stroke-linejoin="round"/>
<path d="M409.4 64.3h3v4h4v3h-4v4h-3v-4h-4v-3h4z" fill="#fff" stroke="#222" stroke-width="1" stroke-linejoin="round"/>
<!-- joint -->
<path d="M450.4 76.7L457.2 68.6V86.6L450.4 91.6z" fill="url(#gcyl)" stroke="#444" stroke-width="1"/>
<path d="M457 68.5a2.7 1.8 0 0 1 5.4 0V76.5a2.7 1.8 0 0 1 -5.4 0z" fill="url(#gcyl)" stroke="#444" stroke-width="1"/>
<ellipse cx="459.7" cy="68.4" rx="2.7" ry="1.8" fill="#fff" stroke="#444" stroke-width="0.9"/><circle cx="459.7" cy="68.4" r="0.6" fill="#333"/>
<path d="M469.7 70.4L477.1 76.7V92.2L469.7 86.6z" fill="url(#gcyl)" stroke="#444" stroke-width="1"/>
<path d="M464.6 77.5a2.7 1.8 0 0 1 5.4 0V86a2.7 1.8 0 0 1 -5.4 0z" fill="url(#gcyl)" stroke="#444" stroke-width="1"/>
<ellipse cx="467.3" cy="77.4" rx="2.7" ry="1.8" fill="#f4f5f7" stroke="#444" stroke-width="0.9"/>
<path d="M459.6 79.8V85M467.4 71.7V77.6" stroke="#ff7a00" stroke-width="1.2"/>
<!-- construct -->
<path d="M520.7 72.3L527.6 66H537.5V86.6L530 92.8H520.7z" fill="url(#gg)" stroke="#222" stroke-width="1.2" stroke-linejoin="round"/>
<path d="M520.7 72.3L527.6 66H537.5L530 72.3z" fill="#fafafb"/>
<path d="M530 72.3L537.5 66V86.6L530 92.8z" fill="#4d8a3c" stroke="#2a5a20" stroke-width="0.8"/>
<path d="M520.7 72.3L527.6 66H537.5V86.6L530 92.8H520.7z" fill="none" stroke="#222" stroke-width="1.2" stroke-linejoin="round"/>
<path d="M541.3 74.2L549.7 65.8V86L541.3 93.7z" fill="#e8935a" stroke="#7a2a08" stroke-width="1.1" stroke-linejoin="round"/>
<!-- inspect -->
<path d="M604 74.4H632.6M604 72V76.8M632.6 72V76.8" stroke="#333" stroke-width="1.1" fill="none"/>
<rect x="604" y="82.3" width="28.8" height="5.8" rx="1" fill="#f2c230" stroke="#a87408" stroke-width="1"/>
<path d="M607 82.8v2M610 82.8v2M613 82.8v2M616 82.8v2M619 82.8v2M622 82.8v2M625 82.8v2M628 82.8v2M631 82.8v2" stroke="#fff0a8" stroke-width="1"/>
<!-- insert -->
<rect x="673.6" y="64.4" width="29.2" height="29.2" rx="1" fill="url(#gsky)" stroke="#3a3a3a" stroke-width="1.3"/>
<path d="M688 86L694.5 80L702 85.5V92.8H688z" fill="#98a0aa"/>
<path d="M674.4 85.5L683.5 77.6L702 92.8H674.4z" fill="#636a78"/>
<path d="M683.5 77.6L702 92.8" stroke="#f2f2f2" stroke-width="0.8"/>
<circle cx="693.8" cy="71.9" r="2.9" fill="#f7e6a8"/><circle cx="693.8" cy="71.9" r="1.8" fill="#fffbe8"/>
<rect x="673.6" y="64.4" width="29.2" height="29.2" rx="1" fill="none" stroke="#3a3a3a" stroke-width="1.3"/>
<!-- make -->
<path d="M738.5 66.6H761.5L764.8 70V91.5Q764.8 93.1 763.2 93.1H736.8Q735.2 93.1 735.2 91.5V70z" fill="url(#gg)" stroke="#333" stroke-width="1.2" stroke-linejoin="round"/>
<path d="M736 69.6H764" stroke="#fff" stroke-width="1.2"/>
<rect x="738" y="76.3" width="24" height="14.2" rx="1.2" fill="#8a8e98" stroke="#333" stroke-width="1"/>
<rect x="740" y="78" width="20" height="11" fill="#5a5e66"/>
<path d="M743.5 82.5H757L759.5 88.5H741z" fill="#f2f2f4" stroke="#c8c8cc" stroke-width="0.4"/>
<path d="M746.6 76.5H750V81.5L748.3 84L746.6 81.5z" fill="#3a78d0" stroke="#183a80" stroke-width="0.6"/>
<rect x="758.8" y="72.8" width="2.2" height="2.2" fill="#18a030"/>
<!-- add-ins -->
<rect x="801.4" y="66.4" width="23.4" height="21" rx="1" fill="url(#gg)" stroke="#333" stroke-width="1.2"/>
<rect x="802.4" y="67.4" width="21.4" height="3.6" fill="#9096a4"/>
<path d="M802 71.6H824.4" stroke="#333" stroke-width="0.8"/>
<path d="M805.5 74.5L809.5 76.8L805.5 79.1M811 77H815.5" fill="none" stroke="#333" stroke-width="1.1"/>
<g transform="translate(824.1,87) scale(0.78)"><path d="M-1.5 -7.8h3l.5 2 1.7.7 1.8-1.1 2.1 2.1-1.1 1.8.7 1.7 2 .5v3l-2 .5-.7 1.7 1.1 1.8-2.1 2.1-1.8-1.1-1.7.7-.5 2h-3l-.5-2-1.7-.7-1.8 1.1-2.1-2.1 1.1-1.8-.7-1.7-2-.5v-3l2-.5.7-1.7-1.1-1.8 2.1-2.1 1.8 1.1 1.7-.7z" fill="#c2d4ee" stroke="#1e3460" stroke-width="1.3" stroke-linejoin="round"/><circle r="2.7" fill="#fff" stroke="#1e3460" stroke-width="0.9"/></g>
<!-- select -->
<rect x="869" y="61" width="38" height="38" fill="#0696d7"/>
<rect x="873.4" y="64.8" width="20.2" height="13.8" fill="none" stroke="#6fa81c" stroke-width="1.5"/>
<path d="M893.6 78.7V92.2L896.8 89.3L899.3 94.6L901.7 93.5L899.3 88.3H903.4z" fill="url(#gg)" stroke="#111" stroke-width="0.9" stroke-linejoin="round"/>
<!-- stop sketch -->
<path d="M973 65.4L985.8 71.2L970.3 87L957.5 80.5z" fill="url(#gg)" stroke="#333" stroke-width="1.2" stroke-linejoin="round"/>
<path d="M977.3 67.3L961.8 82.7M981.5 69.3L966 84.8M967.8 70.4L980.6 76.5M962.7 75.4L975.5 81.7" stroke="#444" stroke-width="0.9" fill="none"/>
<path d="M970.6 87.6L975.8 92L986 81.8" fill="none" stroke="#4a9a0e" stroke-width="3.2"/>
<!--TI1-->
</svg>
<div class="abs panelhdr" style="left:4px;top:123px;width:300px;height:25px"><span class="abs" style="left:24.6px;top:6px">BROWSER</span></div>
<div class="tree" style="left:40px;top:153px;width:152px"></div>
<div class="abs" style="left:65px;top:155px;width:102px;height:16px;background:#8e8e8e"></div>
<div class="abs" style="left:98px;top:156px;font-size:11px;font-weight:bold;color:#fff;white-space:nowrap;line-height:14px;letter-spacing:0.15px">Lantern v8</div>
<div class="tree" style="left:57px;top:177px;width:135px"><span class="abs" style="left:34px">Document Settings</span></div>
<div class="tree" style="left:57px;top:201px;width:111px"><span class="abs" style="left:34px">Named Views</span></div>
<div class="tree" style="left:57px;top:225px;width:96px"><span class="abs" style="left:59px">Origin</span></div>
<div class="tree" style="left:57px;top:249px;width:115px"><span class="abs" style="left:59px">Sketches</span></div>
<div class="tree" style="left:76px;top:273px;width:123px"><span class="abs" style="left:58px">Base Circle</span></div>
<div class="tree" style="left:76px;top:297px;width:123px"><span class="abs" style="left:58px">Base-Neck</span></div>
<div class="tree" style="left:76px;top:321px;width:135px"><span class="abs" style="left:58px">Small Hexgon</span></div>
<div class="tree" style="left:57px;top:345px;width:100px"><span class="abs" style="left:59px">Base:1</span></div>
<div class="abs panelhdr" style="left:4px;top:659px;width:300px;height:25px"><span class="abs" style="left:24.6px;top:6px">COMMENTS</span></div>
<svg class="abs" style="left:0;top:120px" width="310" height="570" viewBox="0 120 310 570">
<!--BI0-->
<defs>
<linearGradient id="bfg" x1="0" y1="0" x2="0" y2="1"><stop offset="0" stop-color="#ffffff"/><stop offset="1" stop-color="#c4c8d2"/></linearGradient>
<linearGradient id="btg" x1="0" y1="0" x2="1" y2="1"><stop offset="0.3" stop-color="#bbbbbb"/><stop offset="1" stop-color="#2a2a2a"/></linearGradient>
<linearGradient id="bsk" x1="0" y1="0" x2="1" y2="1"><stop offset="0.25" stop-color="#ffffff"/><stop offset="1" stop-color="#8cb8ee"/></linearGradient>
<radialGradient id="bby" cx="0.4" cy="0.35" r="0.7"><stop offset="0" stop-color="#fffbd0"/><stop offset="0.5" stop-color="#f8e23c"/><stop offset="1" stop-color="#e8c010"/></radialGradient>
<radialGradient id="bbb" cx="0.4" cy="0.35" r="0.7"><stop offset="0" stop-color="#f4f8ff"/><stop offset="0.6" stop-color="#bcd0f8"/><stop offset="1" stop-color="#98b4ec"/></radialGradient>
<g id="bulbY"><path d="M-2.2 3.6h4.4v3.4q0 1.4-2.2 1.4t-2.2-1.4z" fill="#a8a8ac" stroke="#4a4a4a" stroke-width="0.8"/><path d="M-1.8 5.6h3.6" stroke="#e8e8e8" stroke-width="0.8"/><circle cx="0" cy="0" r="4.7" fill="url(#bby)" stroke="#c09a10" stroke-width="0.9"/><ellipse cx="-1.4" cy="-1.8" rx="1.5" ry="1.2" fill="#fff" fill-opacity="0.85"/></g>
<g id="bulbB"><path d="M-2.2 3.6h4.4v3.4q0 1.4-2.2 1.4t-2.2-1.4z" fill="#a8a8ac" stroke="#4a4a4a" stroke-width="0.8"/><path d="M-1.8 5.6h3.6" stroke="#e8e8e8" stroke-width="0.8"/><circle cx="0" cy="0" r="4.7" fill="url(#bbb)" stroke="#6484cc" stroke-width="0.9"/><ellipse cx="-1.4" cy="-1.8" rx="1.5" ry="1.2" fill="#fff" fill-opacity="0.9"/></g>
<g id="fold"><path d="M0 1.2Q0 0 1.2 0H6.2L7.2 2H13.6Q14.6 2 14.6 3V11.2Q14.6 12.2 13.6 12.2H1Q0 12.2 0 11.2z" fill="url(#bfg)" stroke="#333" stroke-width="1.1" stroke-linejoin="round"/><path d="M0.4 2.6H7" stroke="#333" stroke-width="0.9"/></g>
<g id="tric"><path d="M0 0L8.4 5.9L0 12.2z" fill="url(#bfg)" stroke="#333" stroke-width="1.3" stroke-linejoin="round"/></g>
<g id="trie"><path d="M0 11L11 11L11 0z" fill="url(#btg)" stroke="#333" stroke-width="0.8" stroke-linejoin="round"/></g>
<g id="skic"><rect x="0" y="0" width="15.6" height="15.4" fill="url(#bsk)" stroke="#111" stroke-width="1.25"/><path d="M3.8 3.4V12.6H13.4" fill="none" stroke="#111" stroke-width="1.2"/><g transform="translate(6.2,9.6) rotate(-45)"><path d="M-1.6 0L1.4-1.5V1.5z" fill="#7a4a20"/><rect x="1.4" y="-1.5" width="10.6" height="3" fill="#f8c418" stroke="#a87808" stroke-width="0.5"/><path d="M1.4 -0.3h10.6" stroke="#fff0a0" stroke-width="0.8"/></g></g>
<g id="pin"><path d="M0.6 0.4h5.4M3.3 0.4v2M0.2 4.6h6.2l-1.6-2.4h-3z" fill="#e83a18" stroke="#e83a18" stroke-width="1" stroke-linejoin="round"/></g>
</defs>
<!-- header icons -->
<path d="M19.5 131.6v6.4l-4.6-3.2zM14 131.6v6.4l-4.6-3.2z" fill="#222"/>
<circle cx="287.3" cy="135" r="4.6" fill="#111"/><path d="M284.6 135h5.4" stroke="#f1f1f1" stroke-width="1.4"/>
<path d="M299.5 129.5v11M301.8 131.5v7" stroke="#555" stroke-width="1"/>
<!-- row1 -->
<use href="#trie" x="20.8" y="157.4"/>
<use href="#bulbY" x="50.5" y="161.4"/>
<g transform="translate(68.4,155.2)"><path d="M1 4.8Q1 3.6 2 3L4 1.2Q4.6 0.8 5.4 0.8H7.6Q8.8 0.8 8.8 2V6.6H13Q14.8 6.6 14.8 8.2V12.2Q14.8 13 14.2 13.6L13 14.8Q12.6 15.2 11.8 15.2H2.2Q1 15.2 1 14z" fill="#fdfdfd" stroke="#2a2a2a" stroke-width="1.15" stroke-linejoin="round"/><path d="M1.8 5.4H6.2V14.4H1.8zM7.4 9.6H12V14.4H7.4z" fill="#dcdee2"/><path d="M12.2 9.4L14.2 7.6V12.4L12.2 14.4z" fill="#c4c7ce"/><path d="M6.8 5L8.4 2.6V8L6.8 9z" fill="#e4e6ea"/><path d="M1.4 4.8H6.6V15M6.8 9H12.4V15M12.4 9L14.4 7.2M6.6 4.8L8.6 2" fill="none" stroke="#2a2a2a" stroke-width="0.55"/></g>
<circle cx="177.3" cy="163.2" r="6.1" fill="#fff" stroke="#222" stroke-width="0.95"/><circle cx="177.3" cy="163.2" r="2.1" fill="#111"/>
<!-- row2 -->
<use href="#tric" x="40.4" y="181"/>
<g transform="translate(69,186.9) scale(0.87)"><path d="M-1.5 -7.8h3l.5 2 1.7.7 1.8-1.1 2.1 2.1-1.1 1.8.7 1.7 2 .5v3l-2 .5-.7 1.7 1.1 1.8-2.1 2.1-1.8-1.1-1.7.7-.5 2h-3l-.5-2-1.7-.7-1.8 1.1-2.1-2.1 1.1-1.8-.7-1.7-2-.5v-3l2-.5.7-1.7-1.1-1.8 2.1-2.1 1.8 1.1 1.7-.7z" fill="#555"/><circle r="3.4" fill="#f1f1f1"/><circle r="1.5" fill="#555"/><circle r="3.4" fill="none" stroke="#555" stroke-width="0.1"/></g>
<!-- row3 -->
<use href="#tric" x="40.4" y="205"/>
<use href="#fold" x="61.2" y="205.3"/>
<!-- row4 -->
<use href="#tric" x="40.4" y="229"/>
<use href="#bulbB" x="68.2" y="233.2"/>
<use href="#fold" x="86.2" y="229.3"/>
<!-- row5 -->
<use href="#trie" x="39.2" y="253.4"/>
<use href="#bulbY" x="68.5" y="257.3"/>
<use href="#fold" x="86.2" y="253.4"/>
<!-- row6-8 -->
<use href="#bulbB" x="86.4" y="281.1"/><use href="#skic" x="104.2" y="275.3"/><use href="#pin" x="104.2" y="274.6"/>
<use href="#bulbB" x="86.4" y="305.1"/><use href="#skic" x="104.2" y="299.3"/><use href="#pin" x="104.2" y="298.6"/>
<use href="#bulbY" x="86.4" y="329.1"/><use href="#skic" x="104.2" y="323.3"/>
<!-- row9 -->
<use href="#tric" x="40.4" y="349.1"/>
<use href="#bulbB" x="68.5" y="353.2"/>
<g transform="translate(86,347.4)"><path d="M0.6 5Q0.6 3.6 2 3.4L4.6 0.8Q5.4 0.2 6.4 0.2H14Q15.6 0.2 15.6 1.8V10Q15.6 11 15 11.6L12.6 14.2Q12 14.8 11 14.8H2Q0.6 14.8 0.6 13.4z" fill="#f6f6f8" stroke="#2a2a2a" stroke-width="1.2" stroke-linejoin="round"/><path d="M1.4 4.4H11Q12.2 4.4 12.2 5.6V14.2" fill="#d4d7de" stroke="none"/><rect x="1.2" y="4.2" width="10.8" height="10" rx="1" fill="#d4d7de"/><path d="M1 4H11Q12.4 4 12.4 5.4V14.4M12.2 4.2L15.2 1" fill="none" stroke="#2a2a2a" stroke-width="0.8"/></g>
<!-- comments header icons -->
<circle cx="287.3" cy="671" r="4.6" fill="#111"/><path d="M284.6 671h5.4M287.3 668.3v5.4" stroke="#f1f1f1" stroke-width="1.3"/>
<path d="M299.5 665.5v11M301.8 667.5v7" stroke="#555" stroke-width="1"/>
<!--BI1-->
</svg>
<div class="abs" style="left:1112px;top:230px;width:249.5px;height:453.5px;background:#f2f2f2;border:1px solid #cfcfcf"></div>
<div class="abs" style="left:1112px;top:254px;width:249px;height:1px;background:#cfcfcf"></div>
<div class="abs" style="left:1112px;top:647px;width:249px;height:1px;background:#cfcfcf"></div>
<div class="abs" style="left:1137.4px;top:237px;font-size:10px;color:#4a4a4a;white-space:nowrap;letter-spacing:-0.15px">SKETCH PALETTE</div>
<div class="abs" style="left:1353px;top:255px;width:5px;height:392px;background:#c6c6c6"></div>
<div class="abs" style="left:1353px;top:255px;width:5px;height:212px;background:#8a8a8a;border-radius:2.5px"></div>
<div class="pl" style="left:1130px;top:264px;font-weight:bold;font-size:11.5px">Options</div>
<div class="pl" style="top:294px">Construction</div>
<div class="pl" style="top:324px">Look At</div>
<div class="pl" style="top:354px">Sketch Grid</div>
<div class="pl" style="top:384px">Snap</div>
<div class="pl" style="top:414px">Slice</div>
<div class="pl" style="top:444px">Show Profile</div>
<div class="pl" style="top:474px">Show Points</div>
<div class="pl" style="top:504px">Show Dimensions</div>
<div class="pl" style="top:534px">Show Constraints</div>
<div class="pl" style="top:564px">3D Sketch</div>
<div class="pl" style="left:1130px;top:594px;font-weight:bold;font-size:11.5px">Constraints</div>
<div class="pl" style="top:624px">Coincident</div>

<div class="abs" style="left:1277px;top:655px;width:73px;height:21px;background:#e9e9e9;border:1px solid #bdbdbd;font-size:12px;color:#555;text-align:center;line-height:21px;white-space:nowrap">Stop Sketch</div>
<svg class="abs" style="left:1110px;top:228px" width="256" height="460" viewBox="1110 228 256 460">
<!--PI0-->
<defs>
<linearGradient id="cbu" x1="0" y1="0" x2="0" y2="1"><stop offset="0" stop-color="#ffffff"/><stop offset="1" stop-color="#c4c4c4"/></linearGradient>
<linearGradient id="cbc" x1="0" y1="0" x2="0" y2="1"><stop offset="0" stop-color="#a4a4a4"/><stop offset="1" stop-color="#e6e6e6"/></linearGradient>
<g id="cbU"><rect x="-6.1" y="-6.1" width="12.2" height="12.2" rx="3" fill="url(#cbu)" stroke="#555" stroke-width="1.3"/></g>
<g id="cbC"><rect x="-6.1" y="-6.1" width="12.2" height="12.2" rx="3" fill="url(#cbc)" stroke="#555" stroke-width="1.3"/><path d="M-3.9 1.2L-1.5 3.7L3.9 -4.2" fill="none" stroke="#000" stroke-width="1.8"/></g>
</defs>
<path d="M1114.8 237.5v10" stroke="#666" stroke-width="0.8"/><path d="M1116.6 237.5v10" stroke="#444" stroke-width="1.1"/>
<circle cx="1128.6" cy="242.5" r="4.6" fill="#111"/><path d="M1125.9 242.5h5.4" stroke="#f1f1f1" stroke-width="1.4"/>
<path d="M1347.2 239.4v6.4l4.6-3.2zM1352.6 239.4v6.4l4.6-3.2z" fill="#222"/>
<path d="M1117.3 267.3h8.4l-4.2 5.8z" fill="#222"/>
<path d="M1117.3 597.3h8.4l-4.2 5.8z" fill="#222"/>
<!-- construction -->
<path d="M1244.7 294.4L1231.2 299.5L1244.7 304.5" fill="none" stroke="#333" stroke-width="1.1"/>
<path d="M1233 299.5H1246" stroke="#ff8a00" stroke-width="1.2" stroke-dasharray="2 1.4" fill="none"/>
<path d="M1240.2 292.2Q1245 299.5 1240.2 306.8" stroke="#ff8a00" stroke-width="1.2" stroke-dasharray="2 1.6" fill="none"/>
<!-- look at -->
<path d="M1231.2 326.8L1235.2 322.4L1235.6 324.6L1242 323.4L1242.3 326.8z" fill="#9a9eaa" stroke="#333844" stroke-width="0.8" stroke-linejoin="round"/>
<rect x="1230.8" y="327.4" width="14.6" height="9.8" rx="0.8" fill="#fff" stroke="#333844" stroke-width="1.3"/>
<rect x="1233.4" y="330.4" width="9.2" height="4" fill="#b4b8c4" stroke="#333844" stroke-width="1"/>
<!-- checkboxes -->
<use href="#cbC" x="1238" y="359.5"/><use href="#cbU" x="1238" y="389.5"/><use href="#cbU" x="1238" y="419.5"/><use href="#cbC" x="1238" y="449.5"/><use href="#cbC" x="1238" y="479.5"/><use href="#cbC" x="1238" y="509.5"/><use href="#cbC" x="1238" y="539.5"/><use href="#cbU" x="1238" y="569.5"/>
<!-- coincident -->
<rect x="1232" y="621.9" width="2" height="2" fill="#e81800"/><rect x="1232" y="636" width="2" height="2" fill="#e81800"/>
<path d="M1233.5 625.2V633.4M1231.6 631.4L1233.5 633.8L1235.4 631.4M1234 636.6H1245" fill="none" stroke="#444" stroke-width="1"/>
<!--PI1-->
</svg>
<div class="abs" style="left:556px;top:660px;width:253px;height:23.8px;background:#f2f2f2"></div>
<svg class="abs" style="left:550px;top:655px" width="260" height="32" viewBox="550 655 260 32">
<!--NI0-->
<defs>
<linearGradient id="nlens" x1="0" y1="0" x2="0" y2="1"><stop offset="0" stop-color="#ffffff"/><stop offset="1" stop-color="#c4dcdc"/></linearGradient>
<linearGradient id="ngrid" x1="0" y1="0" x2="0" y2="1"><stop offset="0" stop-color="#d8dae0"/><stop offset="1" stop-color="#5a6070"/></linearGradient>
<g id="ndd"><path d="M0 0h5.8l-2.9 3.4z" fill="#222"/></g>
</defs>
<!-- orbit -->
<ellipse cx="567.4" cy="672.7" rx="7.4" ry="2.9" fill="none" stroke="#222" stroke-width="1.2"/>
<path d="M559.6 673.6L563.6 672.4L562.8 677.4z" fill="#222" stroke="#f2f2f2" stroke-width="0.4"/>
<path d="M566.3 679.2V668.4H564.6L567.4 664.4L570.2 668.4H568.5V679.2z" fill="#fff" stroke="#222" stroke-width="1" stroke-linejoin="round"/>
<path d="M560.4 671.2A7.4 2.9 0 0 1 574.4 671.2" fill="none" stroke="#222" stroke-width="1.2"/>
<use href="#ndd" x="580.2" y="670.2"/>
<!-- look at -->
<path d="M593 669.2L597.3 664.8L598 667L604.5 665.2V669.2z" fill="#9a9eaa" stroke="#333844" stroke-width="0.8" stroke-linejoin="round"/>
<rect x="592.7" y="669.6" width="14.8" height="9.6" rx="0.8" fill="#fff" stroke="#333844" stroke-width="1.3"/>
<rect x="595.4" y="672.5" width="9.4" height="4" fill="#b4b8c4" stroke="#333844" stroke-width="1"/>
<!-- hand -->
<path d="M623.2 679.2Q620.6 676 618.8 673.2Q618.4 671.8 619.8 671.8Q621 672 622.6 674.2V667.2Q622.6 666 623.6 666Q624.6 666 624.6 667.2V665.6Q624.6 664.4 625.7 664.4Q626.8 664.4 626.8 665.6V665.4Q626.8 664.4 627.9 664.4Q629 664.4 629 665.6V666.6Q629 665.6 630 665.6Q631 665.6 631 666.8V669Q631.2 668 632.2 668Q633.4 668.2 633.2 669.6Q633 673.4 632 675.6Q631.2 677.6 630.8 679.2z" fill="#fff" stroke="#222" stroke-width="1.1" stroke-linejoin="round"/>
<path d="M624.6 667.2V671.4M626.8 665.6V671M629 666V671.2M631 668.4V672" stroke="#222" stroke-width="0.9" fill="none"/>
<!-- zoom -->
<path d="M651.8 674L656.2 678.2" stroke="#222" stroke-width="2.6" stroke-linecap="round"/>
<circle cx="648.7" cy="670.8" r="4.4" fill="url(#nlens)" stroke="#222" stroke-width="1.2"/>
<path d="M655.4 666.8H659.8M657.6 664.6V669M655.4 670.6H659.8" stroke="#222" stroke-width="1"/>
<!-- zoom window -->
<rect x="670.4" y="664.4" width="15.4" height="15" fill="none" stroke="#333" stroke-width="0.8" stroke-dasharray="1.8 1.4"/>
<path d="M681.2 675L685.2 678.8" stroke="#222" stroke-width="2.8" stroke-linecap="round"/>
<circle cx="676.8" cy="670.5" r="6.2" fill="url(#nlens)" stroke="#222" stroke-width="1.3"/>
<use href="#ndd" x="691.1" y="670.3"/>
<!-- monitor -->
<path d="M715.6 679.3Q717 677.4 717.4 676.6H720.8Q721.2 677.4 722.6 679.3z" fill="#f2f2f4" stroke="#444" stroke-width="0.8"/>
<rect x="711.6" y="664.7" width="15" height="12.2" rx="1" fill="#f0f1f4" stroke="#333" stroke-width="1.2"/>
<rect x="713.9" y="666.7" width="10.4" height="7.8" rx="0.8" fill="#9ab8e2" stroke="#1e3a78" stroke-width="1.1"/>
<use href="#ndd" x="729.4" y="670.3"/>
<!-- grid -->
<rect x="742.5" y="664.8" width="15" height="14.6" rx="0.6" fill="url(#ngrid)" stroke="#333" stroke-width="1.1"/>
<g fill="#fff">
<rect x="744" y="666.2" width="2" height="2"/><rect x="746.8" y="666.2" width="2" height="2"/><rect x="749.6" y="666.2" width="2" height="2"/><rect x="752.4" y="666.2" width="2" height="2"/><rect x="755" y="666.2" width="1.8" height="2"/>
<rect x="744" y="669" width="2" height="2"/><rect x="746.8" y="669" width="2" height="2"/><rect x="749.6" y="669" width="2" height="2"/><rect x="752.4" y="669" width="2" height="2"/><rect x="755" y="669" width="1.8" height="2"/>
<rect x="744" y="671.8" width="2" height="2" fill-opacity="0.85"/><rect x="746.8" y="671.8" width="2" height="2" fill-opacity="0.85"/><rect x="749.6" y="671.8" width="2" height="2" fill-opacity="0.85"/><rect x="752.4" y="671.8" width="2" height="2" fill-opacity="0.85"/><rect x="755" y="671.8" width="1.8" height="2" fill-opacity="0.85"/>
<rect x="744" y="674.6" width="2" height="2" fill-opacity="0.7"/><rect x="746.8" y="674.6" width="2" height="2" fill-opacity="0.7"/><rect x="749.6" y="674.6" width="2" height="2" fill-opacity="0.7"/><rect x="752.4" y="674.6" width="2" height="2" fill-opacity="0.7"/><rect x="755" y="674.6" width="1.8" height="2" fill-opacity="0.7"/>
<rect x="744" y="677.2" width="2" height="1.6" fill-opacity="0.6"/><rect x="746.8" y="677.2" width="2" height="1.6" fill-opacity="0.6"/><rect x="749.6" y="677.2" width="2" height="1.6" fill-opacity="0.6"/><rect x="752.4" y="677.2" width="2" height="1.6" fill-opacity="0.6"/><rect x="755" y="677.2" width="1.8" height="1.6" fill-opacity="0.6"/>
</g>
<use href="#ndd" x="760.2" y="670.3"/>
<!-- viewports -->
<g fill="#c6d9f0" stroke="#24407a" stroke-width="1.2">
<rect x="773.6" y="665.7" width="6.9" height="5.9" rx="1.2"/><rect x="780.5" y="665.7" width="6.9" height="5.9" rx="1.2"/><rect x="773.6" y="671.6" width="6.9" height="5.9" rx="1.2"/><rect x="780.5" y="671.6" width="6.9" height="5.9" rx="1.2"/>
</g>
<g fill="#86a6d6"><rect x="775.6" y="667.7" width="2.9" height="1.9"/><rect x="782.5" y="667.7" width="2.9" height="1.9"/><rect x="775.6" y="673.6" width="2.9" height="1.9"/><rect x="782.5" y="673.6" width="2.9" height="1.9"/></g>
<use href="#ndd" x="791.2" y="670.3"/>
<!--NI1-->
</svg>
<div id="bottombar" class="abs"></div>
<svg class="abs" style="left:0;top:690px" width="1366" height="48" viewBox="0 690 1366 48">
<!--TL0-->
<defs>
<g id="tlext"><path d="M0 4L2.4 0.6H9.8V12L7.4 15.2H0z" fill="#a4c0e2" stroke="#2a3f6a" stroke-width="1" stroke-linejoin="round"/><path d="M0 4L2.4 0.6H9.8L7.4 4z" fill="#cfe0f2"/><path d="M7.4 4L9.8 0.6V12L7.4 15.2z" fill="#7898c8"/><path d="M0 11.6H7.4L9.8 8.6V12L7.4 15.2H0z" fill="#e4e6ea"/><path d="M0 4L2.4 0.6H9.8V12L7.4 15.2H0z" fill="none" stroke="#2a3f6a" stroke-width="1" stroke-linejoin="round"/><path d="M0 12V15.2H7.4L9.8 12" fill="none" stroke="#333" stroke-width="1"/><path d="M13.9 14V1.4M11.8 3.6L13.9 0.8L16 3.6" fill="none" stroke="#333" stroke-width="1.2"/></g>
<g id="tlpat"><rect x="0.5" y="0.5" width="5" height="4.8" fill="#f4f4f4" stroke="#333" stroke-width="0.9"/><rect x="0.5" y="5.3" width="5" height="4.8" fill="#f4f4f4" stroke="#333" stroke-width="0.9"/><rect x="3.7" y="10.4" width="5.2" height="5.2" fill="#d0e4fa" stroke="#2470d0" stroke-width="1.2"/><path d="M15.8 12.6H10.8M12.8 10.6L10.6 12.6L12.8 14.6" fill="none" stroke="#111" stroke-width="1.2"/></g>
<g id="tlfj"><path d="M4.6 1.2L7.6 -0.6L13.6 5.2V8.4L9 12.4L6.6 8.6z" fill="#fff" stroke="#ff8a10" stroke-width="1.6" stroke-linejoin="round"/><path d="M5.4 1.8L7.4 0.6L12.6 5.6L10.4 7.4z" fill="#fff"/><path d="M10.4 7.4L12.6 5.6V8L9.2 11z" fill="#d8d8dc"/><path d="M0.6 6.2Q0.6 4 3 4Q5.4 4 5.4 6.2V13.6Q5.4 15.6 3 15.6Q0.6 15.6 0.6 13.6z" fill="url(#gcyl)" stroke="#333" stroke-width="0.9"/><path d="M4.4 3.4L6.6 1.6L7.8 6L5.4 8z" fill="#e8e8ec" stroke="#555" stroke-width="0.5"/></g>
<g id="tlhole"><path d="M0.4 0.6H15.6V7.6L10.8 14.6H5.2L0.4 7.6z" fill="#a4c0e2" stroke="#2a3f6a" stroke-width="1.1" stroke-linejoin="round"/><path d="M1.6 1.6H14.4L10.4 9H5.6z" fill="#d4e2f4"/><circle cx="8" cy="11.6" r="3.3" fill="#e8eaee" stroke="#444" stroke-width="0.9"/></g>
<g id="tlfil"><path d="M0.6 4.6L4 0.8H10.6Q15.6 1.6 16 7.4V11.4L12.4 15.6H0.6z" fill="url(#gg)" stroke="#333" stroke-width="1.1" stroke-linejoin="round"/><path d="M6.2 1.4Q8.2 0.6 10.6 0.9Q15.4 1.8 15.8 7.4V10.4L12.6 12.6V10Q12 5.2 7.6 4.4z" fill="#6f98cc" stroke="#2a3f6a" stroke-width="0.7"/><path d="M7 2.4Q12.4 2.8 14 8" fill="none" stroke="#c8dcf2" stroke-width="1.3"/><path d="M0.6 4.6H7.6Q12 5.2 12.4 10V15.6" fill="none" stroke="#555" stroke-width="0.7"/></g>
<g id="tljoint"><path d="M0.4 6.6L4.8 1.4V12L0.4 15.4z" fill="url(#gcyl)" stroke="#555" stroke-width="0.9"/><path d="M4.6 1.6a1.8 1.2 0 0 1 3.6 0V7a1.8 1.2 0 0 1 -3.6 0z" fill="url(#gcyl)" stroke="#555" stroke-width="0.8"/><path d="M10.8 2.6L15.6 6.6V15.6L10.8 12z" fill="url(#gcyl)" stroke="#555" stroke-width="0.9"/><path d="M7.6 7.4a1.8 1.2 0 0 1 3.6 0V12a1.8 1.2 0 0 1 -3.6 0z" fill="url(#gcyl)" stroke="#555" stroke-width="0.8"/></g>
</defs>
<!-- playback -->
<g fill="#444">
<path d="M11 707.2h1.6v13.8H11zM23.2 707.2v13.8L12.6 714.1z"/>
<path d="M44.7 706v14.2L35.2 713.1zM45.8 710.8h2.2v5.8h-2.2z"/>
<path d="M60.9 706.3v15.2L72.8 713.9z"/>
<path d="M84.7 710.8h2.2v5.8h-2.2zM88 706v14.2L97.5 713.1z"/>
<path d="M111 707.2v13.8L121.5 714.1zM121.5 707.2h1.6v13.8h-1.6z"/>
</g>
<!-- track -->
<path d="M154.4 724.5V730H490.2V724.5M178.3 724.5V730M202.3 724.5V730M226.3 724.5V730M250.2 724.5V730M274.2 724.5V730M298.2 724.5V730M322.1 724.5V730M346.1 724.5V730M370 724.5V730M394 724.5V730M418 724.5V730M442 724.5V730M466 724.5V730" fill="none" stroke="#c6c6c6" stroke-width="1.3"/>
<use href="#skic" x="146.4" y="705.4"/>
<use href="#tlext" x="170" y="705.4"/>
<use href="#skic" x="194.6" y="705.4"/>
<use href="#tlpat" x="218" y="705.2"/>
<use href="#tlfj" x="244" y="705.2"/>
<use href="#tlhole" x="266" y="705.4"/>
<use href="#tlext" x="290" y="705.4"/>
<use href="#tlfil" x="314" y="705.2"/>
<use href="#tlfil" x="338" y="705.2"/>
<rect x="362.6" y="705.2" width="16" height="15.8" fill="none" stroke="#000" stroke-width="0.8"/>
<use href="#skic" x="362.8" y="705.4"/>
<g opacity="0.28">
<use href="#skic" x="386.4" y="705.4"/>
<use href="#tlfj" x="412" y="705.2"/>
<use href="#tlhole" x="434" y="705.4"/>
<use href="#tlpat" x="458" y="705.2"/>
<use href="#tljoint" x="482" y="705"/>
</g>
<path d="M376.2 699H387.8V701.6L383 705.4V730.8H381V705.4L376.2 701.6z" fill="#555"/>
<!-- settings gear -->
<g transform="translate(1345,713.4) scale(0.9)"><path d="M-1.5 -7.8h3l.5 2 1.7.7 1.8-1.1 2.1 2.1-1.1 1.8.7 1.7 2 .5v3l-2 .5-.7 1.7 1.1 1.8-2.1 2.1-1.8-1.1-1.7.7-.5 2h-3l-.5-2-1.7-.7-1.8 1.1-2.1-2.1 1.1-1.8-.7-1.7-2-.5v-3l2-.5.7-1.7-1.1-1.8 2.1-2.1 1.8 1.1 1.7-.7z" fill="#555"/><circle r="3.6" fill="#f2f2f2"/><circle r="1.7" fill="#555"/></g>
<!--TL1-->
</svg>
<div id="taskbar" class="abs"></div>
<div class="abs" style="left:1222.6px;top:746px;font-size:12px;color:#fff;white-space:nowrap;transform:scaleX(0.86);transform-origin:0 0">ENG</div>
<div class="abs" style="left:1261.5px;top:746px;font-size:12px;color:#fff;white-space:nowrap;transform:scaleX(0.92);transform-origin:0 0">5:44 PM</div>
<svg class="abs" style="left:0;top:738px" width="1366" height="30" viewBox="0 738 1366 30">
<!--TK0-->
<!-- windows -->
<path d="M10 747.2L16.6 746.2V752.5H10zM17.6 746L26 744.8V752.5H17.6zM10 753.5H16.6V759.8L10 758.8zM17.6 753.5H26V761.2L17.6 760z" fill="#fff"/>
<!-- search -->
<circle cx="56.2" cy="750.6" r="5.3" fill="none" stroke="#fff" stroke-width="1.5"/><path d="M52.4 754.6L46.2 760.8" stroke="#fff" stroke-width="1.6"/>
<!-- task view -->
<path d="M82.6 745.4H92.4M82.6 759.6H92.4M82.6 745.4V747M92.4 745.4V747M82.6 759.6V758M92.4 759.6V758" fill="none" stroke="#fff" stroke-width="1.2"/>
<rect x="83.6" y="748.8" width="8" height="7.2" fill="none" stroke="#fff" stroke-width="1.4"/>
<path d="M96.2 745V747M96.2 750V759.8" stroke="#fff" stroke-width="1.4"/>
<!-- explorer -->
<path d="M120.8 747.2Q120.8 746.2 121.8 746.2H127L128.4 748H136.4Q137.4 748 137.4 749V758.6H120.8z" fill="#f8d060"/>
<path d="M120.8 749.6H137.4V759.6H120.8z" fill="#fbe28a"/>
<path d="M123.4 754H134.8V759.6H123.4z" fill="#3a98e8"/><path d="M126.6 756.8h5v2.8h-5z" fill="#fbe28a"/>
<!-- Z -->
<text x="165.5" y="761" font-family="Liberation Sans, Arial, sans-serif" font-weight="bold" font-size="21" fill="#d81818" stroke="#8a0808" stroke-width="0.5" text-anchor="middle">Z</text>
<!-- chrome -->
<circle cx="240.2" cy="753" r="7.4" fill="#e8453c"/>
<path d="M240.2 753L233.8 756.7A7.4 7.4 0 0 0 240.2 760.4L243.9 754z" fill="#34a853"/>
<path d="M233.8 756.7A7.4 7.4 0 0 1 233.8 749.3L240.2 753z" fill="#34a853"/>
<path d="M240.2 760.4A7.4 7.4 0 0 0 246.6 749.3H240.2L243.6 755z" fill="#fbc116"/>
<circle cx="240.2" cy="753" r="3.4" fill="#fff"/><circle cx="240.2" cy="753" r="2.6" fill="#4a8af4"/>
<!-- fusion -->
<rect x="259" y="738" width="36" height="30" fill="#333536"/>
<rect x="268.8" y="744.8" width="16.2" height="16.2" rx="1" fill="#f6d2b0"/><rect x="268.8" y="753.5" width="16.2" height="7.5" fill="#f0b482"/>
<text x="277.2" y="758.8" font-family="Liberation Sans, Arial, sans-serif" font-weight="bold" font-size="15.5" fill="#fff" stroke="#c8641c" stroke-width="0.8" text-anchor="middle">F</text>
<!-- paint -->
<path d="M306.2 755Q306.2 748.6 313 748Q318.4 748 318.6 752Q318.6 754.4 316.2 754.8Q314.6 755.4 315.4 757Q316.2 759.6 313 760Q306.4 760.2 306.2 755z" fill="#e8e4dc" stroke="#888" stroke-width="0.5"/>
<circle cx="309.4" cy="753" r="1.3" fill="#e03030"/><circle cx="312.4" cy="750.6" r="1.3" fill="#30a0e0"/><circle cx="309.8" cy="756.8" r="1.3" fill="#40b040"/><circle cx="315.6" cy="751.4" r="1.2" fill="#f0c020"/>
<path d="M320 745.4L321.4 745.4L320.6 760.6H319.2z" fill="#d88a30"/><path d="M318.6 745h3.4v3h-3.4z" fill="#f0a848"/>
<!-- underlines -->
<path d="M116 767H135M189 767H217M226 767H255M259.5 767H295M300 767H329M337 767H372M381 767H402" stroke="#76b9ed" stroke-width="2"/>
<path d="M135 767H143" stroke="#4a6a88" stroke-width="2"/>
<!-- people -->
<circle cx="1081.6" cy="749" r="2.8" fill="none" stroke="#fff" stroke-width="1.2"/><path d="M1077.6 757.6Q1077.8 753 1081.6 753Q1085.2 753 1085.4 756.4" fill="none" stroke="#fff" stroke-width="1.2"/>
<circle cx="1075.4" cy="753.4" r="2.3" fill="none" stroke="#fff" stroke-width="1.2"/><path d="M1071.6 760.4Q1071.8 756.8 1075.4 756.8Q1078.8 756.8 1079 760.4" fill="none" stroke="#fff" stroke-width="1.2"/>
<!-- chevron -->
<path d="M1102.4 756L1108 750.2L1113.6 756" fill="none" stroke="#fff" stroke-width="1.4"/>
<!-- cloud -->
<path d="M1127 757.6Q1124 757.4 1124.2 754.6Q1124.6 752.4 1127 752.4Q1127.6 749.4 1130.6 749.4Q1131.6 746.8 1134.4 747Q1137.2 747.4 1137.6 750.4Q1139.6 751 1139.4 753.4Q1139 755.6 1137 755.8H1131z" fill="#f0f0f0"/>
<circle cx="1135.6" cy="756.4" r="4.2" fill="#2a78e0"/><path d="M1133.4 755.6A2.4 2.4 0 0 1 1137.6 755.2M1137.8 757.2A2.4 2.4 0 0 1 1133.6 757.6" fill="none" stroke="#fff" stroke-width="1"/>
<!-- battery -->
<rect x="1153.4" y="750.4" width="9.6" height="7" fill="none" stroke="#fff" stroke-width="1.1"/><rect x="1163.2" y="752.4" width="1.2" height="3" fill="#fff"/><rect x="1154.4" y="751.6" width="2.8" height="4.6" fill="#fff"/>
<path d="M1149.6 747.4V749.6M1152 747.4V749.6M1148.4 749.8H1153.2V752Q1153.2 753.8 1150.8 753.8Q1148.4 753.8 1148.4 752zM1150.8 753.8V756.6" fill="none" stroke="#fff" stroke-width="1"/>
<!-- wifi -->
<path d="M1175 758.6A11 11 0 0 1 1186 747.6" fill="none" stroke="#bbb" stroke-width="1.1"/>
<path d="M1178.2 759A8 8 0 0 1 1186.2 751" fill="none" stroke="#ddd" stroke-width="1.1"/>
<path d="M1181.4 759.2A5 5 0 0 1 1186.4 754.2" fill="none" stroke="#fff" stroke-width="1.2"/>
<circle cx="1185.6" cy="758.8" r="1.4" fill="#fff"/>
<!-- volume -->
<path d="M1196 751.4H1198.6L1202.4 748V759L1198.6 755.6H1196z" fill="none" stroke="#fff" stroke-width="1.1" stroke-linejoin="round"/>
<path d="M1204.6 751.2Q1206.2 753.5 1204.6 755.8" fill="none" stroke="#fff" stroke-width="1"/><path d="M1206.8 749.4Q1209.4 753.5 1206.8 757.6" fill="none" stroke="#aaa" stroke-width="1"/><path d="M1209 747.8Q1212.6 753.5 1209 759.2" fill="none" stroke="#777" stroke-width="1"/>
<!-- notification -->
<path d="M1325.4 745.6H1341.2V757.6H1335.6L1333.3 760.4L1331 757.6H1325.4z" fill="#fff"/>
<path d="M1328 749h10.6M1328 751.6h10.6M1328 754.2h6.4" stroke="#111" stroke-width="0.9"/>
<path d="M1361.5 738V768" stroke="#555" stroke-width="1"/>
<!--TK1-->
</svg>
</body>
</html>
